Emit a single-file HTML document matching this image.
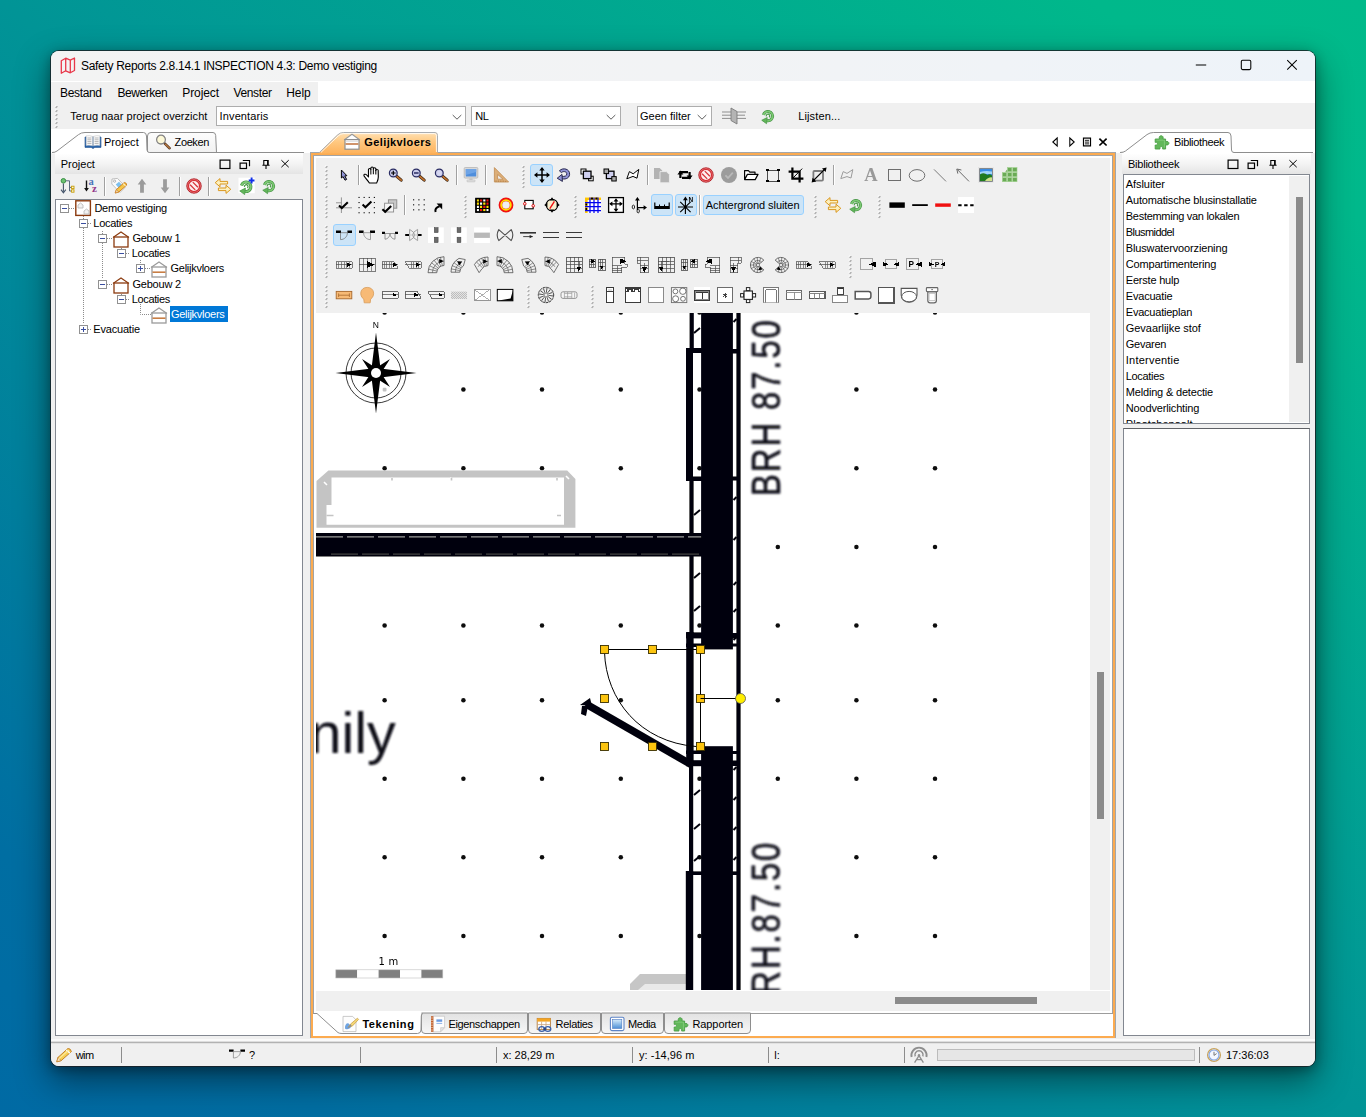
<!DOCTYPE html><html lang="nl"><head><meta charset="utf-8"><title>Safety Reports</title><style>
*{box-sizing:border-box;margin:0;padding:0}
html,body{width:1366px;height:1117px;overflow:hidden}
body{position:relative;font-family:"Liberation Sans",sans-serif;font-size:11px;color:#000;
 background:linear-gradient(to top right,#006aa4 0%,#006ea2 12%,#019496 50%,#00b88b 90%,#00ba8a 100%);}
#shadow{position:absolute;left:51px;top:51px;width:1264px;height:1015px;border-radius:8px;box-shadow:0 0 0 1px rgba(25,30,35,.78),0 14px 34px 2px rgba(0,0,0,.44),0 3px 12px 1px rgba(0,0,0,.30)}
#win{position:absolute;left:51px;top:51px;width:1264px;height:1015px;border-radius:8px;overflow:hidden;background:#f0f0f0}
#c{position:absolute;left:-51px;top:-51px;width:1366px;height:1117px}
#c div,#c span,#c svg{position:absolute}
.t{white-space:nowrap;line-height:14px;height:14px}
.b{font-weight:bold}
.sep{width:1px;background:#a0a0a0}
.sepw{width:1px;background:#fff}
.grip{width:3px;background:repeating-linear-gradient(to bottom,#f0f0f0 0 1px,#fff 1px 2px,#bdbdbd 2px 3.4px,#f0f0f0 3.4px 4px);transform:skewY(-35deg)}
.selbtn{background:#cce4f7;border:1px solid #99d1ff;border-radius:3px}
.hdr{background:linear-gradient(to bottom,#ffffff 0%,#f4f4f4 50%,#e4e4e4 100%)}
.box{background:#fff;border:1px solid #828790}
.combo{background:#fff;border:1px solid #adadad;height:20px}
</style></head><body>
<div id="shadow"></div><div id="win"><div id="c">
<div class="" style="left:51px;top:51px;width:1264px;height:30px;background:linear-gradient(to right,#f3f3f3 0%,#f2f3f5 50%,#eef3f9 100%)"></div>
<svg style="left:55.5px;top:53.5px" width="24" height="24" viewBox="-12 -12 24 24"><path d="M-6.7 -5.3 L-2.3 -7.8 L2.3 -5.8 L6.5 -8 L6.5 4.5 L2.3 6.8 L-2.3 4.8 L-6.7 7.2 Z M-2.3 -7.8 V4.8 M2.3 -5.8 V6.8" fill="none" stroke="#e8384a" stroke-width="1.3" stroke-linejoin="round"/></svg>
<span class="t " style="left:81px;top:59px;font-size:12px;line-height:16px;height:16px;top:57.8px;letter-spacing:-0.30px">Safety Reports 2.8.14.1 INSPECTION 4.3: Demo vestiging</span>
<svg style="left:1189px;top:53.3px" width="24" height="24" viewBox="-12 -12 24 24"><path d="M-5.2 0 H5.2" stroke="#000" stroke-width="1.05"/></svg>
<svg style="left:1234px;top:52.9px" width="24" height="24" viewBox="-12 -12 24 24"><rect x="-4.7" y="-4.8" width="9.5" height="9.4" rx="1.3" fill="none" stroke="#000" stroke-width="1.05"/></svg>
<svg style="left:1280px;top:52.9px" width="24" height="24" viewBox="-12 -12 24 24"><path d="M-4.8 -4.9 L4.8 4.7 M4.8 -4.9 L-4.8 4.7" stroke="#000" stroke-width="1.05"/></svg>
<div class="" style="left:51px;top:81px;width:1264px;height:22px;background:#fff"></div>
<div class="" style="left:51px;top:82px;width:267px;height:21px;background:#f0f0f0"></div>
<span class="t " style="left:60px;top:86px;font-size:12px;line-height:16px;height:16px;top:84.8px;letter-spacing:-0.34px">Bestand</span>
<span class="t " style="left:117.5px;top:86px;font-size:12px;line-height:16px;height:16px;top:84.8px;letter-spacing:-0.47px">Bewerken</span>
<span class="t " style="left:182.3px;top:86px;font-size:12px;line-height:16px;height:16px;top:84.8px;letter-spacing:-0.11px">Project</span>
<span class="t " style="left:233.4px;top:86px;font-size:12px;line-height:16px;height:16px;top:84.8px;letter-spacing:-0.35px">Venster</span>
<span class="t " style="left:286.2px;top:86px;font-size:12px;line-height:16px;height:16px;top:84.8px;letter-spacing:-0.03px">Help</span>
<div class="" style="left:51px;top:103px;width:1264px;height:26px;background:#f0f0f0"></div>
<svg style="left:54.3px;top:105px" width="5" height="25" viewBox="0 0 5 25"><path d="M0.9 2 L2.5 0.4" stroke="#fff" stroke-width="1.2"/><path d="M1.6 2.8 L3.4 1.2" stroke="#a9a9a9" stroke-width="1.5"/><path d="M0.9 6 L2.5 4.4" stroke="#fff" stroke-width="1.2"/><path d="M1.6 6.8 L3.4 5.2" stroke="#a9a9a9" stroke-width="1.5"/><path d="M0.9 10 L2.5 8.4" stroke="#fff" stroke-width="1.2"/><path d="M1.6 10.8 L3.4 9.2" stroke="#a9a9a9" stroke-width="1.5"/><path d="M0.9 14 L2.5 12.4" stroke="#fff" stroke-width="1.2"/><path d="M1.6 14.8 L3.4 13.2" stroke="#a9a9a9" stroke-width="1.5"/><path d="M0.9 18 L2.5 16.4" stroke="#fff" stroke-width="1.2"/><path d="M1.6 18.8 L3.4 17.2" stroke="#a9a9a9" stroke-width="1.5"/><path d="M0.9 22 L2.5 20.4" stroke="#fff" stroke-width="1.2"/><path d="M1.6 22.8 L3.4 21.2" stroke="#a9a9a9" stroke-width="1.5"/></svg>
<span class="t " style="left:70.3px;top:109px;letter-spacing:0.05px">Terug naar project overzicht</span>
<div class="combo" style="left:216px;top:106px;width:250px;height:20px;"></div>
<span class="t " style="left:219.6px;top:109px;letter-spacing:0.12px">Inventaris</span>
<svg style="left:445px;top:104.5px" width="24" height="24" viewBox="-12 -12 24 24"><path d="M-4.3 -2 L0 2.2 L4.3 -2" fill="none" stroke="#555" stroke-width="0.95"/></svg>
<div class="combo" style="left:471px;top:106px;width:150px;height:20px;"></div>
<span class="t " style="left:475.3px;top:109px;letter-spacing:-0.60px">NL</span>
<svg style="left:599px;top:104.5px" width="24" height="24" viewBox="-12 -12 24 24"><path d="M-4.3 -2 L0 2.2 L4.3 -2" fill="none" stroke="#555" stroke-width="0.95"/></svg>
<div class="combo" style="left:637px;top:106px;width:75px;height:20px;"></div>
<span class="t " style="left:640px;top:109px;">Geen filter</span>
<svg style="left:690px;top:104.5px" width="24" height="24" viewBox="-12 -12 24 24"><path d="M-4.3 -2 L0 2.2 L4.3 -2" fill="none" stroke="#555" stroke-width="0.95"/></svg>
<svg style="left:722px;top:104px" width="24" height="24" viewBox="-12 -12 24 24"><path d="M-14 -4 H-3 M-13 -0.8 H-3 M-13.5 2.4 H-3 M3 -4 H14 M3 -0.8 H11 M3 2.4 H12" stroke="#8f8f8f" stroke-width="1"/><path d="M-3 -8 L3 -4.5 V8 L-3 4.5 Z" fill="#b4b4b4" stroke="#7c7c7c" stroke-width="0.9"/></svg>
<svg style="left:756px;top:104px" width="24" height="24" viewBox="-12 -12 24 24"><g transform="scale(0.92)"><path d="M-4.9 -1.2 A5 5 0 1 1 -1.4 5" fill="none" stroke="#3f8f3f" stroke-width="3.3"/><path d="M-4.9 -1.2 A5 5 0 1 1 -1.4 5" fill="none" stroke="#7cc873" stroke-width="2"/><path d="M-0.8 1.6 L-6.8 4.6 L-1.6 8.4 Z" fill="#62b65a" stroke="#3f8f3f" stroke-width="0.7" stroke-linejoin="round"/><path d="M-1.8 0.4 A1.9 1.9 0 1 1 1.2 1.4" fill="none" stroke="#4a9c47" stroke-width="1.3"/></g></svg>
<span class="t " style="left:798.2px;top:109px;letter-spacing:0.13px">Lijsten...</span>
<div class="" style="left:51px;top:129px;width:1264px;height:24px;background:#fff"></div>
<div class="" style="left:52px;top:153px;width:252px;height:884px;background:#f0f0f0"></div>
<div class="hdr" style="left:55px;top:153px;width:248px;height:21px;"></div>
<span class="t " style="left:60.8px;top:157px;letter-spacing:-0.02px">Project</span>
<svg style="left:212.5px;top:152px" width="24" height="24" viewBox="-12 -12 24 24"><rect x="-4.9" y="-3.9" width="9.8" height="8.4" fill="none" stroke="#000" stroke-width="1.2"/></svg>
<svg style="left:233px;top:152px" width="24" height="24" viewBox="-12 -12 24 24"><rect x="-4.9" y="-0.9" width="6.4" height="5.4" fill="none" stroke="#000" stroke-width="1.2"/><path d="M-2.2 -3.5 H4.5 V2.2" fill="none" stroke="#000" stroke-width="1.2"/></svg>
<svg style="left:253.5px;top:152px" width="24" height="24" viewBox="-12 -12 24 24"><path d="M-2.2 1.2 V-3.5 H2.2 V1.2 M-3.6 1.3 H3.6 M0 1.3 V5 M1.6 -3.5 V1.2" fill="none" stroke="#000" stroke-width="1.1"/></svg>
<svg style="left:272.5px;top:152px" width="24" height="24" viewBox="-12 -12 24 24"><path d="M-3.6 -3.8 L3.7 3.2 M3.7 -3.8 L-3.6 3.2" stroke="#000" stroke-width="1"/></svg>
<svg style="left:55px;top:173.8px" width="24" height="24" viewBox="-12 -12 24 24"><circle cx="-3.6" cy="-5.2" r="2.3" fill="#6cc070" stroke="#2f8a3a" stroke-width="0.9"/><path d="M-3.6 -2.4 V5.6 M-6 3.6 L-3.6 6.8 L-1.2 3.6" fill="none" stroke="#44546a" stroke-width="1.1"/><path d="M-1.2 -5.2 H2.5 V5 H4.4 M2.5 1.4 H4.4" fill="none" stroke="#5a6a7e" stroke-width="1"/><rect x="4.6" y="0.2" width="2.4" height="2.4" fill="#fffbe0" stroke="#c59a00" stroke-width="0.9"/><rect x="4.6" y="3.8" width="2.4" height="2.4" fill="#fffbe0" stroke="#c59a00" stroke-width="0.9"/></svg>
<svg style="left:78.5px;top:173.8px" width="24" height="24" viewBox="-12 -12 24 24"><path d="M-4.5 -5.5 V3.4" stroke="#111" stroke-width="1.4"/><path d="M-6.9 2 L-4.5 5.4 L-2.1 2 Z" fill="#111"/><text x="-2.4" y="-0.6" font-family="Liberation Serif, serif" font-weight="bold" font-size="10.5" fill="#4a72b8">a</text><text x="1" y="6" font-family="Liberation Serif, serif" font-weight="bold" font-size="11" fill="#93388a">z</text></svg>
<svg style="left:107px;top:173.8px" width="24" height="24" viewBox="-12 -12 24 24"><path d="M-7 -7 L-1.5 -7.6 L6.5 1 L1 6.5 L-7.2 -2 Z" fill="#fbfbfb" stroke="#b9b9b9" stroke-width="0.9"/><circle cx="-4.4" cy="-4.8" r="1.1" fill="#fff" stroke="#999" stroke-width="0.7"/><path d="M-3.3 -1.5 L0 -4.2 L3.2 -0.8 L-0.2 2 Z" fill="#7ec0ee"/><path d="M-3.8 7 L-2.6 3.6 L5.2 -3.4 Q7.6 -3.6 7.7 -0.9 L-0.2 6 Z" fill="#f6c649" stroke="#c77a1e" stroke-width="0.9"/><path d="M-3.8 7 L-2.6 3.6 L-0.2 6 Z" fill="#f3dcb4" stroke="#c77a1e" stroke-width="0.6"/><path d="M4.1 -2.4 L6.7 0" stroke="#fff" stroke-width="1"/></svg>
<svg style="left:130px;top:173.8px" width="24" height="24" viewBox="-12 -12 24 24"><path d="M0 -7.2 L4.3 -1.6 H1.9 V6.8 H-1.9 V-1.6 H-4.3 Z" fill="#9b9b9b"/></svg>
<svg style="left:153px;top:173.8px" width="24" height="24" viewBox="-12 -12 24 24"><path d="M0 7.2 L4.3 1.6 H1.9 V-6.8 H-1.9 V1.6 H-4.3 Z" fill="#9b9b9b"/></svg>
<svg style="left:181.5px;top:173.8px" width="24" height="24" viewBox="-12 -12 24 24"><circle r="7.3" fill="#d42a30"/><circle r="6.5" fill="none" stroke="#f29a9a" stroke-width="0.8" opacity="0.85"/><circle r="4.9" fill="#fdeeee"/><path d="M-3.9 -1.2 L1.2 3.9 M-1.2 -3.9 L3.9 1.2" stroke="#d8343a" stroke-width="1.3"/><circle r="7.3" fill="none" stroke="#a8141c" stroke-width="0.7"/></svg>
<svg style="left:211px;top:173.8px" width="24" height="24" viewBox="-12 -12 24 24"><path d="M-7.8 -3.3 L-3 -7.4 V-4.6 H4.6 V-2 H-3 V0.8 Z" fill="#fdf0bd" stroke="#d9971f" stroke-width="1" stroke-linejoin="round"/><path d="M7.8 3.3 L3 -0.8 V2 H-4.6 V4.6 H3 V7.4 Z" fill="#fdf0bd" stroke="#d9971f" stroke-width="1" stroke-linejoin="round"/></svg>
<svg style="left:234.5px;top:173.8px" width="24" height="24" viewBox="-12 -12 24 24"><rect x="-8.5" y="-8.3" width="16.2" height="15.5" fill="#fff"/><g transform="translate(-0.8 0.6)"><g transform="scale(0.95)"><path d="M-4.9 -1.2 A5 5 0 1 1 -1.4 5" fill="none" stroke="#3f8f3f" stroke-width="3.3"/><path d="M-4.9 -1.2 A5 5 0 1 1 -1.4 5" fill="none" stroke="#7cc873" stroke-width="2"/><path d="M-0.8 1.6 L-6.8 4.6 L-1.6 8.4 Z" fill="#62b65a" stroke="#3f8f3f" stroke-width="0.7" stroke-linejoin="round"/><path d="M-1.8 0.4 A1.9 1.9 0 1 1 1.2 1.4" fill="none" stroke="#4a9c47" stroke-width="1.3"/></g></g><path d="M4.6 -8.4 V-2.6 M1.7 -5.5 H7.5" stroke="#1030e8" stroke-width="1.9"/></svg>
<svg style="left:257px;top:173.8px" width="24" height="24" viewBox="-12 -12 24 24"><g transform="scale(0.92)"><path d="M-4.9 -1.2 A5 5 0 1 1 -1.4 5" fill="none" stroke="#3f8f3f" stroke-width="3.3"/><path d="M-4.9 -1.2 A5 5 0 1 1 -1.4 5" fill="none" stroke="#7cc873" stroke-width="2"/><path d="M-0.8 1.6 L-6.8 4.6 L-1.6 8.4 Z" fill="#62b65a" stroke="#3f8f3f" stroke-width="0.7" stroke-linejoin="round"/><path d="M-1.8 0.4 A1.9 1.9 0 1 1 1.2 1.4" fill="none" stroke="#4a9c47" stroke-width="1.3"/></g></svg>
<div class="sep" style="left:104px;top:177px;width:1px;height:19px;"></div>
<div class="sepw" style="left:105px;top:177px;width:1px;height:19px;"></div>
<div class="sep" style="left:179px;top:177px;width:1px;height:19px;"></div>
<div class="sepw" style="left:180px;top:177px;width:1px;height:19px;"></div>
<div class="sep" style="left:208px;top:177px;width:1px;height:19px;"></div>
<div class="sepw" style="left:209px;top:177px;width:1px;height:19px;"></div>
<div class="box" style="left:55px;top:199px;width:248px;height:837px;"></div>
<svg style="left:0;top:195px" width="310" height="150" viewBox="0 195 310 150"><path d="M69 208.5 H75" stroke="#8c8c8c" stroke-width="1" stroke-dasharray="1 1" fill="none"/><path d="M83.5 216 V219 M83.5 228 V324" stroke="#8c8c8c" stroke-width="1" stroke-dasharray="1 1" fill="none"/><path d="M88 223.5 H92" stroke="#8c8c8c" stroke-width="1" stroke-dasharray="1 1" fill="none"/><path d="M102.5 231 V234 M102.5 243 V279" stroke="#8c8c8c" stroke-width="1" stroke-dasharray="1 1" fill="none"/><path d="M107 238.5 H112 M107 284.5 H112" stroke="#8c8c8c" stroke-width="1" stroke-dasharray="1 1" fill="none"/><path d="M121.5 246 V249 M121.5 292 V295" stroke="#8c8c8c" stroke-width="1" stroke-dasharray="1 1" fill="none"/><path d="M126 253.5 H130 M126 299.5 H130" stroke="#8c8c8c" stroke-width="1" stroke-dasharray="1 1" fill="none"/><path d="M140.5 260 V264 M140.5 304 V314.5 H151" stroke="#8c8c8c" stroke-width="1" stroke-dasharray="1 1" fill="none"/><path d="M145 268.5 H151" stroke="#8c8c8c" stroke-width="1" stroke-dasharray="1 1" fill="none"/><path d="M88 329.5 H92" stroke="#8c8c8c" stroke-width="1" stroke-dasharray="1 1" fill="none"/><rect x="60.5" y="204.5" width="8" height="8" fill="#fff" stroke="#919191"/><path d="M62 208.5 h5" stroke="#3a4ea0" stroke-width="1"/><rect x="79.5" y="219.5" width="8" height="8" fill="#fff" stroke="#919191"/><path d="M81 223.5 h5" stroke="#3a4ea0" stroke-width="1"/><rect x="98.5" y="234.5" width="8" height="8" fill="#fff" stroke="#919191"/><path d="M100 238.5 h5" stroke="#3a4ea0" stroke-width="1"/><rect x="117.5" y="249.5" width="8" height="8" fill="#fff" stroke="#919191"/><path d="M119 253.5 h5" stroke="#3a4ea0" stroke-width="1"/><rect x="136.5" y="264.5" width="8" height="8" fill="#fff" stroke="#919191"/><path d="M138 268.5 h5" stroke="#3a4ea0" stroke-width="1"/><path d="M140.5 266 v5" stroke="#3a4ea0" stroke-width="1"/><rect x="98.5" y="280.5" width="8" height="8" fill="#fff" stroke="#919191"/><path d="M100 284.5 h5" stroke="#3a4ea0" stroke-width="1"/><rect x="117.5" y="295.5" width="8" height="8" fill="#fff" stroke="#919191"/><path d="M119 299.5 h5" stroke="#3a4ea0" stroke-width="1"/><rect x="79.5" y="325.5" width="8" height="8" fill="#fff" stroke="#919191"/><path d="M81 329.5 h5" stroke="#3a4ea0" stroke-width="1"/><path d="M83.5 327 v5" stroke="#3a4ea0" stroke-width="1"/><rect x="75.8" y="200.8" width="14.6" height="14.6" fill="#fff" stroke="#8b3a0e" stroke-width="1.4"/><path d="M78 205 l2.5 -2 l2.5 2 v3 h-5z M84 211 l2.5 -2 l2.5 2 v3 h-5z" fill="#f2f2f2" stroke="#b5b5b5" stroke-width="0.8"/><path d="M113 237.5 l8 -5.5 l8 5.5" fill="none" stroke="#8b3a0e" stroke-width="1.1"/><rect x="114" y="237" width="14" height="10" fill="#fff" stroke="#8b3a0e" stroke-width="1.3"/><path d="M113 283.5 l8 -5.5 l8 5.5" fill="none" stroke="#8b3a0e" stroke-width="1.1"/><rect x="114" y="283" width="14" height="10" fill="#fff" stroke="#8b3a0e" stroke-width="1.3"/><path d="M151 267.5 l8 -5.5 l8 5.5" fill="none" stroke="#9a9a9a" stroke-width="1.2"/><rect x="152" y="267" width="14" height="10" fill="#fff" stroke="#9a9a9a" stroke-width="1.3"/><path d="M152.5 272.2 h13" stroke="#c87e45" stroke-width="1.6"/><path d="M151 313.5 l8 -5.5 l8 5.5" fill="none" stroke="#9a9a9a" stroke-width="1.2"/><rect x="152" y="313" width="14" height="10" fill="#fff" stroke="#9a9a9a" stroke-width="1.3"/><path d="M152.5 318.2 h13" stroke="#c87e45" stroke-width="1.6"/></svg>
<span class="t " style="left:94.4px;top:200.6px;letter-spacing:-0.23px">Demo vestiging</span>
<span class="t " style="left:93.3px;top:215.6px;letter-spacing:-0.27px">Locaties</span>
<span class="t " style="left:132.4px;top:230.6px;letter-spacing:-0.27px">Gebouw 1</span>
<span class="t " style="left:131.8px;top:245.6px;letter-spacing:-0.37px">Locaties</span>
<span class="t " style="left:170.6px;top:260.6px;letter-spacing:-0.28px">Gelijkvloers</span>
<span class="t " style="left:132.4px;top:276.6px;letter-spacing:-0.19px">Gebouw 2</span>
<span class="t " style="left:131.8px;top:291.6px;letter-spacing:-0.37px">Locaties</span>
<div style="left:170px;top:306px;width:58px;height:16px;background:#0078d7"></div>
<span class="t " style="left:171px;top:306.6px;color:#fff;letter-spacing:-0.28px">Gelijkvloers</span>
<span class="t " style="left:93.3px;top:321.6px;letter-spacing:-0.19px">Evacuatie</span>
<div class="" style="left:1119px;top:153px;width:195px;height:884px;background:#f0f0f0"></div>
<div class="hdr" style="left:1122px;top:153px;width:189px;height:21px;"></div>
<span class="t " style="left:1128px;top:157px;letter-spacing:-0.24px">Bibliotheek</span>
<svg style="left:1220.5px;top:152px" width="24" height="24" viewBox="-12 -12 24 24"><rect x="-4.9" y="-3.9" width="9.8" height="8.4" fill="none" stroke="#000" stroke-width="1.2"/></svg>
<svg style="left:1240.5px;top:152px" width="24" height="24" viewBox="-12 -12 24 24"><rect x="-4.9" y="-0.9" width="6.4" height="5.4" fill="none" stroke="#000" stroke-width="1.2"/><path d="M-2.2 -3.5 H4.5 V2.2" fill="none" stroke="#000" stroke-width="1.2"/></svg>
<svg style="left:1261px;top:152px" width="24" height="24" viewBox="-12 -12 24 24"><path d="M-2.2 1.2 V-3.5 H2.2 V1.2 M-3.6 1.3 H3.6 M0 1.3 V5 M1.6 -3.5 V1.2" fill="none" stroke="#000" stroke-width="1.1"/></svg>
<svg style="left:1281px;top:152px" width="24" height="24" viewBox="-12 -12 24 24"><path d="M-3.6 -3.8 L3.7 3.2 M3.7 -3.8 L-3.6 3.2" stroke="#000" stroke-width="1"/></svg>
<div class="box" style="left:1123px;top:174px;width:187px;height:250px;"></div>
<span class="t " style="left:1125.8px;top:177px;letter-spacing:-0.07px">Afsluiter</span>
<span class="t " style="left:1125.8px;top:193px;letter-spacing:-0.17px">Automatische blusinstallatie</span>
<span class="t " style="left:1125.8px;top:209px;letter-spacing:-0.29px">Bestemming van lokalen</span>
<span class="t " style="left:1125.8px;top:225px;letter-spacing:-0.57px">Blusmiddel</span>
<span class="t " style="left:1125.8px;top:241px;letter-spacing:-0.15px">Bluswatervoorziening</span>
<span class="t " style="left:1125.8px;top:257px;letter-spacing:-0.19px">Compartimentering</span>
<span class="t " style="left:1125.8px;top:273px;letter-spacing:-0.21px">Eerste hulp</span>
<span class="t " style="left:1125.8px;top:289px;letter-spacing:-0.20px">Evacuatie</span>
<span class="t " style="left:1125.8px;top:305px;letter-spacing:-0.22px">Evacuatieplan</span>
<span class="t " style="left:1125.8px;top:321px;letter-spacing:-0.05px">Gevaarlijke stof</span>
<span class="t " style="left:1125.8px;top:337px;letter-spacing:-0.25px">Gevaren</span>
<span class="t " style="left:1125.8px;top:353px;letter-spacing:0.22px">Interventie</span>
<span class="t " style="left:1125.8px;top:369px;letter-spacing:-0.33px">Locaties</span>
<span class="t " style="left:1125.8px;top:385px;letter-spacing:-0.18px">Melding &amp; detectie</span>
<span class="t " style="left:1125.8px;top:401px;letter-spacing:-0.16px">Noodverlichting</span>
<div class="" style="left:1124px;top:415px;width:165px;height:8px;overflow:hidden"><span class="t" style="left:1.8px;top:2px">Plaatsbepaalt</span></div>
<div class="" style="left:1289px;top:176px;width:20px;height:246px;background:#f0f0f0"></div>
<div class="" style="left:1296px;top:197px;width:7px;height:166px;background:#8b8b8b"></div>
<div class="box" style="left:1123px;top:428px;width:187px;height:608px;border-top-color:#5f6166"></div>
<div class="" style="left:310px;top:152px;width:806px;height:887px;background:#fcab50;border:1px solid #a3a7ab"></div>
<div class="" style="left:313px;top:155px;width:800px;height:881px;background:#fff"></div>
<div class="" style="left:313px;top:155px;width:800px;height:1px;background:#a3a3a3"></div>
<div class="" style="left:313px;top:155px;width:1px;height:859px;background:#a3a3a3"></div>
<div class="" style="left:1112px;top:155px;width:1px;height:859px;background:#a3a3a3"></div>
<div class="" style="left:316px;top:158px;width:794px;height:155px;background:#f0f0f0"></div>
<div style="left:316px;top:313px;width:774px;height:677px;background:#fff;overflow:hidden"><svg style="left:0;top:0" width="774" height="677" viewBox="316 313 774 677"><defs><filter id="bl" x="-5%" y="-5%" width="110%" height="110%"><feGaussianBlur stdDeviation="0.55"/></filter><filter id="bl2" x="-5%" y="-5%" width="110%" height="110%"><feGaussianBlur stdDeviation="0.9"/></filter></defs><g filter="url(#bl)"><circle cx="384.6" cy="312.4" r="2.25" fill="#0c0c0c"/><circle cx="463.4" cy="312.4" r="2.25" fill="#0c0c0c"/><circle cx="542" cy="312.4" r="2.25" fill="#0c0c0c"/><circle cx="620.8" cy="312.4" r="2.25" fill="#0c0c0c"/><circle cx="699.5" cy="312.4" r="2.25" fill="#0c0c0c"/><circle cx="856.4" cy="312.4" r="2.25" fill="#0c0c0c"/><circle cx="935" cy="312.4" r="2.25" fill="#0c0c0c"/><rect x="382.7" y="387.7" width="3.8" height="3.8" rx="1" fill="#c2c2c2"/><circle cx="463.4" cy="389.6" r="2.25" fill="#0c0c0c"/><circle cx="542" cy="389.6" r="2.25" fill="#0c0c0c"/><circle cx="620.8" cy="389.6" r="2.25" fill="#0c0c0c"/><circle cx="699.5" cy="389.6" r="2.25" fill="#0c0c0c"/><circle cx="856.4" cy="389.6" r="2.25" fill="#0c0c0c"/><circle cx="935" cy="389.6" r="2.25" fill="#0c0c0c"/><circle cx="384.6" cy="468.2" r="2.25" fill="#0c0c0c"/><circle cx="463.4" cy="468.2" r="2.25" fill="#0c0c0c"/><circle cx="542" cy="468.2" r="2.25" fill="#0c0c0c"/><circle cx="620.8" cy="468.2" r="2.25" fill="#0c0c0c"/><circle cx="699.5" cy="468.2" r="2.25" fill="#0c0c0c"/><circle cx="856.4" cy="468.2" r="2.25" fill="#0c0c0c"/><circle cx="935" cy="468.2" r="2.25" fill="#0c0c0c"/><circle cx="384.6" cy="546.9" r="2.25" fill="#0c0c0c"/><circle cx="463.4" cy="546.9" r="2.25" fill="#0c0c0c"/><circle cx="542" cy="546.9" r="2.25" fill="#0c0c0c"/><circle cx="620.8" cy="546.9" r="2.25" fill="#0c0c0c"/><circle cx="699.5" cy="546.9" r="2.25" fill="#0c0c0c"/><circle cx="777.8" cy="546.9" r="2.25" fill="#0c0c0c"/><circle cx="856.4" cy="546.9" r="2.25" fill="#0c0c0c"/><circle cx="935" cy="546.9" r="2.25" fill="#0c0c0c"/><circle cx="384.6" cy="625.5" r="2.25" fill="#0c0c0c"/><circle cx="463.4" cy="625.5" r="2.25" fill="#0c0c0c"/><circle cx="542" cy="625.5" r="2.25" fill="#0c0c0c"/><circle cx="620.8" cy="625.5" r="2.25" fill="#0c0c0c"/><circle cx="699.5" cy="625.5" r="2.25" fill="#0c0c0c"/><circle cx="777.8" cy="625.5" r="2.25" fill="#0c0c0c"/><circle cx="856.4" cy="625.5" r="2.25" fill="#0c0c0c"/><circle cx="935" cy="625.5" r="2.25" fill="#0c0c0c"/><circle cx="384.6" cy="700.2" r="2.25" fill="#0c0c0c"/><circle cx="463.4" cy="700.2" r="2.25" fill="#0c0c0c"/><circle cx="542" cy="700.2" r="2.25" fill="#0c0c0c"/><circle cx="620.8" cy="700.2" r="2.25" fill="#0c0c0c"/><circle cx="699.5" cy="700.2" r="2.25" fill="#0c0c0c"/><circle cx="777.8" cy="700.2" r="2.25" fill="#0c0c0c"/><circle cx="856.4" cy="700.2" r="2.25" fill="#0c0c0c"/><circle cx="935" cy="700.2" r="2.25" fill="#0c0c0c"/><circle cx="384.6" cy="778.7" r="2.25" fill="#0c0c0c"/><circle cx="463.4" cy="778.7" r="2.25" fill="#0c0c0c"/><circle cx="542" cy="778.7" r="2.25" fill="#0c0c0c"/><circle cx="620.8" cy="778.7" r="2.25" fill="#0c0c0c"/><circle cx="699.5" cy="778.7" r="2.25" fill="#0c0c0c"/><circle cx="777.8" cy="778.7" r="2.25" fill="#0c0c0c"/><circle cx="856.4" cy="778.7" r="2.25" fill="#0c0c0c"/><circle cx="935" cy="778.7" r="2.25" fill="#0c0c0c"/><circle cx="384.6" cy="857.3" r="2.25" fill="#0c0c0c"/><circle cx="463.4" cy="857.3" r="2.25" fill="#0c0c0c"/><circle cx="542" cy="857.3" r="2.25" fill="#0c0c0c"/><circle cx="620.8" cy="857.3" r="2.25" fill="#0c0c0c"/><circle cx="699.5" cy="857.3" r="2.25" fill="#0c0c0c"/><circle cx="856.4" cy="857.3" r="2.25" fill="#0c0c0c"/><circle cx="935" cy="857.3" r="2.25" fill="#0c0c0c"/><circle cx="384.6" cy="935.9" r="2.25" fill="#0c0c0c"/><circle cx="463.4" cy="935.9" r="2.25" fill="#0c0c0c"/><circle cx="542" cy="935.9" r="2.25" fill="#0c0c0c"/><circle cx="620.8" cy="935.9" r="2.25" fill="#0c0c0c"/><circle cx="699.5" cy="935.9" r="2.25" fill="#0c0c0c"/><circle cx="856.4" cy="935.9" r="2.25" fill="#0c0c0c"/><circle cx="935" cy="935.9" r="2.25" fill="#0c0c0c"/><path d="M328.4 470.4 L567.2 470.4 L575.4 479 L575.4 527.8 L316.5 527.8 L316.5 481 Z" fill="#c4c4c4"/><path d="M331.5 477.5 L564 477.5 L564 524.7 L326.5 524.7 L326.5 505 L331.5 505 Z" fill="#fff"/><path d="M324 482 l3 3 M566 476 l3 3 M392 477 v3 M451 477 v3 M557 477 v3 M327 515 h8 M556 515 h8" stroke="#fff" stroke-width="1.6"/><path d="M392 477.5 l0 3 M451.5 477.5 l0 3 M557 477.5 l0 3 M326.5 515.5 h7 M561 515.5 h-4" stroke="#c4c4c4" stroke-width="1.6"/><path d="M640 974 L690 974 L690 990 L630 990 L630 984 Z" fill="#c6c6c6"/><path d="M645 984 L690 984 L690 990 L638 990 Z" fill="#e9e9e9"/></g><g filter="url(#bl)" fill="#05060a" stroke="none"><rect x="316" y="533" width="390" height="23.5"/><rect x="316" y="536.4" width="27" height="1" fill="#fff" opacity="0.75"/><rect x="331" y="553.6" width="27" height="1" fill="#fff" opacity="0.3"/><rect x="347" y="536.4" width="27" height="1" fill="#fff" opacity="0.75"/><rect x="362" y="553.6" width="27" height="1" fill="#fff" opacity="0.3"/><rect x="378" y="536.4" width="27" height="1" fill="#fff" opacity="0.75"/><rect x="393" y="553.6" width="27" height="1" fill="#fff" opacity="0.3"/><rect x="409" y="536.4" width="27" height="1" fill="#fff" opacity="0.75"/><rect x="424" y="553.6" width="27" height="1" fill="#fff" opacity="0.3"/><rect x="440" y="536.4" width="27" height="1" fill="#fff" opacity="0.75"/><rect x="455" y="553.6" width="27" height="1" fill="#fff" opacity="0.3"/><rect x="471" y="536.4" width="27" height="1" fill="#fff" opacity="0.75"/><rect x="486" y="553.6" width="27" height="1" fill="#fff" opacity="0.3"/><rect x="502" y="536.4" width="27" height="1" fill="#fff" opacity="0.75"/><rect x="517" y="553.6" width="27" height="1" fill="#fff" opacity="0.3"/><rect x="533" y="536.4" width="27" height="1" fill="#fff" opacity="0.75"/><rect x="548" y="553.6" width="27" height="1" fill="#fff" opacity="0.3"/><rect x="564" y="536.4" width="27" height="1" fill="#fff" opacity="0.75"/><rect x="579" y="553.6" width="27" height="1" fill="#fff" opacity="0.3"/><rect x="595" y="536.4" width="27" height="1" fill="#fff" opacity="0.75"/><rect x="610" y="553.6" width="27" height="1" fill="#fff" opacity="0.3"/><rect x="626" y="536.4" width="27" height="1" fill="#fff" opacity="0.75"/><rect x="641" y="553.6" width="27" height="1" fill="#fff" opacity="0.3"/><rect x="657" y="536.4" width="27" height="1" fill="#fff" opacity="0.75"/><rect x="672" y="553.6" width="27" height="1" fill="#fff" opacity="0.3"/><rect x="688" y="536.4" width="27" height="1" fill="#fff" opacity="0.75"/><rect x="703" y="553.6" width="27" height="1" fill="#fff" opacity="0.3"/><rect x="701.1" y="313" width="31.8" height="336.4"/><rect x="701.1" y="746.2" width="31.8" height="244"/><rect x="689.6" y="313" width="4.2" height="40"/><rect x="686" y="348" width="7" height="132"/><rect x="689.4" y="478" width="4.2" height="57"/><rect x="689.4" y="555" width="4.2" height="80"/><rect x="686.2" y="632" width="7.4" height="134"/><rect x="689" y="760" width="4.2" height="115"/><rect x="689" y="746" width="4.2" height="0"/><rect x="685.8" y="871" width="7.4" height="119"/><rect x="686" y="348" width="16" height="5"/><rect x="686" y="476.5" width="16" height="4.5"/><rect x="686" y="632.4" width="16" height="6"/><rect x="686" y="643.5" width="16" height="3.5"/><rect x="686" y="760.2" width="16" height="6"/><rect x="686" y="750.5" width="16" height="3.5"/><rect x="686" y="871.4" width="16" height="3.6"/><rect x="736.4" y="313" width="4.2" height="677"/><rect x="732" y="349" width="6" height="4.5"/><rect x="732" y="476.5" width="6" height="4"/><rect x="732" y="633" width="6" height="5.5"/><rect x="732" y="643.5" width="6" height="3"/><rect x="732" y="760.5" width="6" height="5.5"/><rect x="732" y="751" width="6" height="3"/><rect x="732" y="871.4" width="6" height="3.6"/></g><g filter="url(#bl)" stroke="#05060a" stroke-width="2" fill="none"><path d="M694 333 l6 -5"/><path d="M694 515 l6 -5"/><path d="M694 578 l6 -5"/><path d="M694 611 l6 -5"/><path d="M694 795 l6 -5"/><path d="M694 829 l6 -5"/><path d="M694 861 l6 -5"/><path d="M733.5 322 l3 -3"/><path d="M733.5 500 l3 -3"/><path d="M733.5 540 l3 -3"/><path d="M733.5 585 l3 -3"/><path d="M733.5 612 l3 -3"/><path d="M733.5 640 l3 -3"/><path d="M733.5 770 l3 -3"/><path d="M733.5 800 l3 -3"/><path d="M733.5 830 l3 -3"/><path d="M733.5 860 l3 -3"/></g><g filter="url(#bl)"><path d="M586 704 L692 765" stroke="#05060a" stroke-width="7.5" fill="none"/><path d="M580 705 L590 698 L592 706 Z M582 706 L588 706 L586 716 L581 714 Z" fill="#05060a"/></g><g filter="url(#bl2)" font-family="Liberation Sans, sans-serif" fill="#0a0a18" stroke="#0a0a18" stroke-width="0.55"><text transform="translate(779.6 496) rotate(-90) scale(0.79 1)" font-size="41.5" letter-spacing="2.45">BRH 87.50</text><text transform="translate(779.8 1018.5) rotate(-90) scale(0.79 1)" font-size="41.5" letter-spacing="2.45">BRH.87.50</text><text x="309.5" y="752.7" font-size="57.5" stroke="none">nily</text></g><g transform="translate(376 373)"><circle r="30" fill="none" stroke="#222" stroke-width="0.9"/><circle r="25" fill="none" stroke="#222" stroke-width="0.9"/><path d="M0 -40.5 L4.5 -4.5 L40.5 0 L4.5 4.5 L0 40.5 L-4.5 4.5 L-40.5 0 L-4.5 -4.5 Z" fill="#000"/><path d="M14 -14 L6 -1.5 L1.5 -6 Z M14 14 L1.5 6 L6 1.5 Z M-14 14 L-6 1.5 L-1.5 6 Z M-14 -14 L-1.5 -6 L-6 -1.5 Z" fill="#000"/><circle r="5" fill="#fff"/><text x="-0.3" y="-45.2" font-size="8.5" text-anchor="middle" font-family="Liberation Sans, sans-serif">N</text></g><text x="388.5" y="964.5" font-size="10" text-anchor="middle" font-family="DejaVu Sans, Liberation Sans, sans-serif" letter-spacing="0.3">1 m</text><rect x="335.8" y="969.8" width="21.4" height="8.2" fill="#808080"/><rect x="357.2" y="969.8" width="21.4" height="8.2" fill="#fff"/><rect x="378.6" y="969.8" width="21.4" height="8.2" fill="#808080"/><rect x="400" y="969.8" width="21.4" height="8.2" fill="#fff"/><rect x="421.4" y="969.8" width="21.4" height="8.2" fill="#808080"/><rect x="335.8" y="969.8" width="107" height="8.2" fill="none" stroke="#c0c0c0" stroke-width="0.6"/><g stroke="#000" stroke-width="1" fill="none"><path d="M604.5 649.5 H700.5 V746.5"/><path d="M604.5 652 C606 700 640 742 696 746.5"/><path d="M700.5 698.5 H740"/></g><rect x="600.5" y="645.5" width="8" height="8" fill="#fcc40f" stroke="#3a3000" stroke-width="0.9"/><rect x="648.5" y="645.5" width="8" height="8" fill="#fcc40f" stroke="#3a3000" stroke-width="0.9"/><rect x="696.5" y="645.5" width="8" height="8" fill="#fcc40f" stroke="#3a3000" stroke-width="0.9"/><rect x="600.5" y="694.5" width="8" height="8" fill="#fcc40f" stroke="#3a3000" stroke-width="0.9"/><rect x="696.5" y="694.5" width="8" height="8" fill="#fcc40f" stroke="#3a3000" stroke-width="0.9"/><rect x="600.5" y="742.5" width="8" height="8" fill="#fcc40f" stroke="#3a3000" stroke-width="0.9"/><rect x="648.5" y="742.5" width="8" height="8" fill="#fcc40f" stroke="#3a3000" stroke-width="0.9"/><rect x="696.5" y="742.5" width="8" height="8" fill="#fcc40f" stroke="#3a3000" stroke-width="0.9"/><path d="M700.5 698.5 H705" stroke="#000"/><circle cx="740.5" cy="698.5" r="5" fill="#ffee00" stroke="#555" stroke-width="0.8"/></svg></div>
<div class="" style="left:1090px;top:313px;width:20px;height:677px;background:#f0f0f0"></div>
<div class="" style="left:1097px;top:672px;width:7px;height:147px;background:#8b8b8b"></div>
<div class="" style="left:316px;top:991px;width:794px;height:20px;background:#f0f0f0"></div>
<div class="" style="left:895px;top:997px;width:142px;height:7px;background:#8b8b8b"></div>
<div class="" style="left:421px;top:1013px;width:692px;height:1px;background:#9c9c9c"></div>
<svg style="left:0;top:1005px" width="1366" height="40" viewBox="0 1005 1366 40">
<defs><linearGradient id="gtb" x1="0" y1="0" x2="0" y2="1"><stop offset="0" stop-color="#e2e2e2"/><stop offset="1" stop-color="#f7f7f7"/></linearGradient></defs>
<path d="M421.5 1013 L421.5 1030 Q421.5 1033.5 425 1033.5 L524 1033.5 Q527.5 1033.5 527.5 1030 L527.5 1013 Z" fill="url(#gtb)" stroke="#8e8e8e"/>
<path d="M528.5 1013 L528.5 1030 Q528.5 1033.5 532 1033.5 L597 1033.5 Q600.5 1033.5 600.5 1030 L600.5 1013 Z" fill="url(#gtb)" stroke="#8e8e8e"/>
<path d="M601.5 1013 L601.5 1030 Q601.5 1033.5 605 1033.5 L660 1033.5 Q663.5 1033.5 663.5 1030 L663.5 1013 Z" fill="url(#gtb)" stroke="#8e8e8e"/>
<path d="M664.5 1013 L664.5 1030 Q664.5 1033.5 668 1033.5 L747 1033.5 Q750.5 1033.5 750.5 1030 L750.5 1013 Z" fill="url(#gtb)" stroke="#8e8e8e"/>
<path d="M313.5 1013.5 H317 L338 1032.6 Q339.4 1033.5 342 1033.5 L417.5 1033.5 Q420.8 1033.5 421 1030 L421.3 1016 Q421.4 1013.5 423 1013.5 Z" fill="#fff" stroke="none"/>
<path d="M313.5 1013.5 H317 L338 1032.6 Q339.4 1033.5 342 1033.5 L417.5 1033.5 Q420.8 1033.5 421 1030 L421.3 1016 Q421.4 1013.5 423 1013.5" fill="none" stroke="#8e8e8e"/>
</svg>
<span class="t b" style="left:362.4px;top:1017px;letter-spacing:0.57px">Tekening</span>
<svg style="left:338.5px;top:1012px" width="24" height="24" viewBox="-12 -12 24 24"><path d="M-8 -7.6 H1.6 L5 -4.2 V7.6 H-8 Z" fill="#fdfdfd" stroke="#bdbdbd" stroke-width="0.8"/><path d="M-6 4.4 C-6.4 0 -3 -2.4 -1.6 0.6 C0.6 0.8 0.4 4 -1.6 4.6 C-3 5.6 -5 5.6 -6 4.4 Z" fill="#6fa4e2"/><path d="M-2.6 3 L-0.6 0.2 L6.4 -5.8 L7.6 -4.6 L1.2 2.2 Z" fill="#f5d878" stroke="#c69a3a" stroke-width="0.7"/><path d="M-4.4 4.6 L-2.6 3 L-0.6 0.2 L0.8 1.4 L-1.4 3.6 Z" fill="#8a8f99"/></svg>
<span class="t " style="left:448.4px;top:1017px;letter-spacing:-0.35px">Eigenschappen</span>
<svg style="left:425.5px;top:1012px" width="24" height="24" viewBox="-12 -12 24 24"><path d="M-5.2 -7.8 H6.6 V3.6 L2.6 7.8 H-5.2 Z" fill="#fdfdfd" stroke="#c6c6c6" stroke-width="0.8"/><path d="M6.6 3.6 H2.6 V7.8 Z" fill="#e2e2e2" stroke="#c6c6c6" stroke-width="0.6"/><rect x="-7" y="-7.8" width="2.4" height="15.6" fill="#c0602e"/><path d="M-7 -6 h2.4 M-7 -3.6 h2.4 M-7 -1.2 h2.4 M-7 1.2 h2.4 M-7 3.6 h2.4 M-7 6 h2.4" stroke="#f3d2b8" stroke-width="0.7"/><rect x="-1.6" y="-4.6" width="5.8" height="2.4" fill="#6b9be0"/><path d="M-1.6 -0.6 H4.2" stroke="#8db3ea" stroke-width="1"/></svg>
<span class="t " style="left:555.6px;top:1017px;letter-spacing:-0.32px">Relaties</span>
<svg style="left:532px;top:1012px" width="24" height="24" viewBox="-12 -12 24 24"><rect x="-6.8" y="-5.6" width="13.2" height="11" fill="#fff" stroke="#b07a3a" stroke-width="0.9"/><rect x="-6.8" y="-5.6" width="13.2" height="3.2" fill="#f4a522"/><path d="M-6.8 0.6 H6.4 M-2.4 -2.4 V5.4 M2 -2.4 V5.4" stroke="#caa27a" stroke-width="0.8"/><ellipse cx="-2.2" cy="5" rx="3" ry="2.3" fill="none" stroke="#3a5fa8" stroke-width="1.3"/><ellipse cx="3.8" cy="5" rx="3" ry="2.3" fill="none" stroke="#3a5fa8" stroke-width="1.3"/><path d="M-0.8 5 H2.4" stroke="#23407e" stroke-width="1.6"/></svg>
<span class="t " style="left:628.1px;top:1017px;letter-spacing:-0.47px">Media</span>
<svg style="left:604.5px;top:1012px" width="24" height="24" viewBox="-12 -12 24 24"><defs><linearGradient id="gmed" x1="0" y1="0" x2="0" y2="1"><stop offset="0" stop-color="#d6ecfb"/><stop offset="1" stop-color="#4c8fd6"/></linearGradient></defs><rect x="-6.6" y="-6.8" width="13.6" height="13.4" rx="1.6" fill="#fff" stroke="#5d84c6" stroke-width="1.1"/><rect x="-4.4" y="-4.6" width="9.2" height="9" fill="url(#gmed)" stroke="#4a78c0" stroke-width="0.6"/></svg>
<span class="t " style="left:692.4px;top:1017px;letter-spacing:-0.07px">Rapporten</span>
<svg style="left:668.5px;top:1012px" width="24" height="24" viewBox="-12 -12 24 24"><path d="M-6.8 -3 H-2.6 C-4 -7.4 2.4 -7.4 1 -3 H3.6 V-0.4 C8 -1.8 8 4.2 3.6 2.8 V7 H0.6 C1.6 3.8 -3 3.8 -2 7 H-6.8 V3 C-3.8 4 -3.8 -0.6 -6.8 0.4 Z" fill="#62b75a" stroke="#4a9e45" stroke-width="0.9" stroke-linejoin="round"/><path d="M-5.6 -1.8 H2.4 V5.8" fill="none" stroke="#8fd487" stroke-width="0.8" opacity="0.8"/></svg>
<svg style="left:323.8px;top:164.5px" width="5" height="25" viewBox="0 0 5 25"><path d="M0.9 2 L2.5 0.4" stroke="#fff" stroke-width="1.2"/><path d="M1.6 2.8 L3.4 1.2" stroke="#a9a9a9" stroke-width="1.5"/><path d="M0.9 6 L2.5 4.4" stroke="#fff" stroke-width="1.2"/><path d="M1.6 6.8 L3.4 5.2" stroke="#a9a9a9" stroke-width="1.5"/><path d="M0.9 10 L2.5 8.4" stroke="#fff" stroke-width="1.2"/><path d="M1.6 10.8 L3.4 9.2" stroke="#a9a9a9" stroke-width="1.5"/><path d="M0.9 14 L2.5 12.4" stroke="#fff" stroke-width="1.2"/><path d="M1.6 14.8 L3.4 13.2" stroke="#a9a9a9" stroke-width="1.5"/><path d="M0.9 18 L2.5 16.4" stroke="#fff" stroke-width="1.2"/><path d="M1.6 18.8 L3.4 17.2" stroke="#a9a9a9" stroke-width="1.5"/><path d="M0.9 22 L2.5 20.4" stroke="#fff" stroke-width="1.2"/><path d="M1.6 22.8 L3.4 21.2" stroke="#a9a9a9" stroke-width="1.5"/></svg>
<svg style="left:520.8px;top:164.5px" width="5" height="25" viewBox="0 0 5 25"><path d="M0.9 2 L2.5 0.4" stroke="#fff" stroke-width="1.2"/><path d="M1.6 2.8 L3.4 1.2" stroke="#a9a9a9" stroke-width="1.5"/><path d="M0.9 6 L2.5 4.4" stroke="#fff" stroke-width="1.2"/><path d="M1.6 6.8 L3.4 5.2" stroke="#a9a9a9" stroke-width="1.5"/><path d="M0.9 10 L2.5 8.4" stroke="#fff" stroke-width="1.2"/><path d="M1.6 10.8 L3.4 9.2" stroke="#a9a9a9" stroke-width="1.5"/><path d="M0.9 14 L2.5 12.4" stroke="#fff" stroke-width="1.2"/><path d="M1.6 14.8 L3.4 13.2" stroke="#a9a9a9" stroke-width="1.5"/><path d="M0.9 18 L2.5 16.4" stroke="#fff" stroke-width="1.2"/><path d="M1.6 18.8 L3.4 17.2" stroke="#a9a9a9" stroke-width="1.5"/><path d="M0.9 22 L2.5 20.4" stroke="#fff" stroke-width="1.2"/><path d="M1.6 22.8 L3.4 21.2" stroke="#a9a9a9" stroke-width="1.5"/></svg>
<div class="selbtn" style="left:530px;top:164px;width:23px;height:22px;"></div>
<svg style="left:332px;top:162.5px" width="24" height="24" viewBox="-12 -12 24 24"><path d="M-2.6 -5 L-2.6 3 L-0.9 1.6 L1 5.2 L2.6 4.4 L0.8 0.9 L2.9 0.7 Z" fill="#8f93d6" stroke="#000" stroke-width="1" stroke-linejoin="miter"/></svg>
<svg style="left:361px;top:162.5px" width="24" height="24" viewBox="-12 -12 24 24"><g transform="scale(1.13 1)"><path d="M-3.2 8 C-4.6 5.4 -7.2 2.6 -8 0.8 C-8.4 -0.6 -6.8 -1.4 -5.8 -0.2 L-4 2 V-5.4 C-4 -7 -1.9 -7 -1.9 -5.4 V-6.8 C-1.9 -8.4 0.3 -8.4 0.3 -6.8 V-6 C0.3 -7.6 2.5 -7.6 2.5 -6 V-4.6 C2.5 -6 4.6 -6 4.6 -4.4 L4.7 2 C4.7 4.6 4 6 3.2 8 Z" fill="#fff" stroke="#000" stroke-width="1" stroke-linejoin="round"/><path d="M-1.9 -5.4 V-0.6 M0.3 -6 V-0.8 M2.5 -5 V-0.6" stroke="#000" stroke-width="0.9"/></g></svg>
<svg style="left:384px;top:162.5px" width="24" height="24" viewBox="-12 -12 24 24"><path d="M0.2 0.8 L5.2 5.2" stroke="#3a2412" stroke-width="3" stroke-linecap="round"/><path d="M1 1.6 L5.2 5.2" stroke="#c0712c" stroke-width="1.7" stroke-linecap="round"/><circle cx="-2.7" cy="-2" r="3.9" fill="#c9cbea" stroke="#2a2c63" stroke-width="1.2"/><path d="M-5 -2 H-0.4 M-2.7 -4.3 V0.3" stroke="#000" stroke-width="1.2"/></svg>
<svg style="left:407px;top:162.5px" width="24" height="24" viewBox="-12 -12 24 24"><path d="M0.2 0.8 L5.2 5.2" stroke="#3a2412" stroke-width="3" stroke-linecap="round"/><path d="M1 1.6 L5.2 5.2" stroke="#c0712c" stroke-width="1.7" stroke-linecap="round"/><circle cx="-2.7" cy="-2" r="3.9" fill="#c9cbea" stroke="#2a2c63" stroke-width="1.2"/><path d="M-5 -2 H-0.4" stroke="#2a2c63" stroke-width="1.3"/></svg>
<svg style="left:430px;top:162.5px" width="24" height="24" viewBox="-12 -12 24 24"><path d="M0.2 0.8 L5.2 5.2" stroke="#3a2412" stroke-width="3" stroke-linecap="round"/><path d="M1 1.6 L5.2 5.2" stroke="#c0712c" stroke-width="1.7" stroke-linecap="round"/><circle cx="-2.7" cy="-2" r="3.9" fill="#c9cbea" stroke="#2a2c63" stroke-width="1.2"/><circle cx="-2.7" cy="-2" r="2.4" fill="#dcdcf2" opacity="0.7"/></svg>
<svg style="left:459px;top:162.5px" width="24" height="24" viewBox="-12 -12 24 24"><rect x="-6.8" y="-7.5" width="13.6" height="10.6" rx="1" fill="#d9d9d9" stroke="#b5b5b5" stroke-width="0.8"/><rect x="-5.2" y="-6" width="10.4" height="7.5" fill="#4f8edc"/><path d="M-5.2 -6 H5.2 V-3 L-5.2 0 Z" fill="#6ea4e6"/><path d="M-1.6 3.1 H1.6 V5 H-1.6Z" fill="#c9c9c9"/><rect x="-4" y="5" width="8" height="1.8" rx="0.6" fill="#e6e6e6" stroke="#b5b5b5" stroke-width="0.6"/></svg>
<svg style="left:488.5px;top:162.5px" width="24" height="24" viewBox="-12 -12 24 24"><path d="M-6.6 -7.4 L7.6 7 H-6.6 Z M-3.4 -0.6 L2 4.2 H-3.4 Z" fill="#dcae78" fill-rule="evenodd" stroke="#c4925a" stroke-width="0.9" stroke-linejoin="round"/><path d="M-5 7 V5.4 M-2.6 7 V5.4 M-0.2 7 V5.4 M2.2 7 V5.4 M4.6 7 V5.8" stroke="#b07c44" stroke-width="0.7"/></svg>
<svg style="left:529.5px;top:162.5px" width="24" height="24" viewBox="-12 -12 24 24"><path d="M0 -7 V7 M-7 0 H7" stroke="#000" stroke-width="1.5"/><path d="M0 -8 L2.7 -4.6 H-2.7 Z M0 8 L2.7 4.6 H-2.7 Z M-8 0 L-4.6 -2.7 V2.7 Z M8 0 L4.6 -2.7 V2.7 Z" fill="#000"/></svg>
<svg style="left:551.5px;top:162.5px" width="24" height="24" viewBox="-12 -12 24 24"><path d="M-4.6 -4.2 C-1 -8 6 -6 5.6 -0.6 C5.2 4 0 4.6 -2.4 3.6 L-2.4 1.2 C0.6 2 3 0.8 2.8 -1.2 C2.6 -3.8 -1 -4 -2.6 -2.4 Z" fill="#9093d6" stroke="#1a1a40" stroke-width="0.9" stroke-linejoin="round"/><path d="M-2 -0.6 L-6.8 3.2 L-1.6 6.4 Z" fill="#9093d6" stroke="#1a1a40" stroke-width="0.9" stroke-linejoin="round"/></svg>
<svg style="left:575px;top:162.5px" width="24" height="24" viewBox="-12 -12 24 24"><rect x="-6" y="-6" width="5" height="5" fill="#fff" stroke="#000" stroke-width="1"/><rect x="1.6" y="1.2" width="4.6" height="4.6" fill="#fff" stroke="#000" stroke-width="1"/><rect x="-3.6" y="-3.8" width="7.6" height="7.4" fill="#cfd0f0" stroke="#000" stroke-width="1.3"/></svg>
<svg style="left:598px;top:162.5px" width="24" height="24" viewBox="-12 -12 24 24"><rect x="-3.6" y="-3.8" width="7.6" height="7.4" fill="#cfd0f0" stroke="#000" stroke-width="1.3"/><rect x="-6" y="-6" width="4.6" height="4.6" fill="#a9a9a9" stroke="#000" stroke-width="1"/><rect x="1.8" y="1.6" width="4.4" height="4.4" fill="#a9a9a9" stroke="#000" stroke-width="1"/></svg>
<svg style="left:620.5px;top:162.5px" width="24" height="24" viewBox="-12 -12 24 24"><path d="M-6.2 3.8 L-3.6 -3.4 L0.2 -1.2 L5.8 -5.6 L4 3.2 L0 1.4 Z" fill="#fff" stroke="#000" stroke-width="1" stroke-linejoin="round"/></svg>
<svg style="left:650px;top:162.5px" width="24" height="24" viewBox="-12 -12 24 24"><path d="M-8 -7 H-2.4 L0.2 -4.4 V4 H-8 Z" fill="#b3b3b3"/><path d="M-2 -3.4 H4.4 L7.4 -0.4 V7.8 H-2 Z" fill="#b3b3b3" stroke="#f0f0f0" stroke-width="0.8"/></svg>
<svg style="left:672.5px;top:162.5px" width="24" height="24" viewBox="-12 -12 24 24"><path d="M-4.6 3 V-2.8 H3" fill="none" stroke="#000" stroke-width="2.2"/><path d="M4.6 -3 V2.8 H-3" fill="none" stroke="#000" stroke-width="2.2"/><path d="M-7.6 -0.4 L-4.6 -4.6 L-1.6 -0.4 Z M7.6 0.4 L4.6 4.6 L1.6 0.4 Z" fill="#000"/></svg>
<svg style="left:693.5px;top:162.5px" width="24" height="24" viewBox="-12 -12 24 24"><circle r="7.3" fill="#d42a30"/><circle r="6.5" fill="none" stroke="#f29a9a" stroke-width="0.8" opacity="0.85"/><circle r="4.9" fill="#fdeeee"/><path d="M-3.9 -1.2 L1.2 3.9 M-1.2 -3.9 L3.9 1.2" stroke="#d8343a" stroke-width="1.3"/><circle r="7.3" fill="none" stroke="#a8141c" stroke-width="0.7"/></svg>
<svg style="left:716.5px;top:162.5px" width="24" height="24" viewBox="-12 -12 24 24"><circle r="8" fill="#9c9c9c"/><path d="M-3.6 0.4 L-1 3 L3.8 -2.4" fill="none" stroke="#b9b9b9" stroke-width="1.8"/></svg>
<svg style="left:738.5px;top:162.5px" width="24" height="24" viewBox="-12 -12 24 24"><path d="M-6.4 4.6 V-4.4 H-2.6 L-1.2 -2.8 H4 V-0.6 M-6.4 4.6 L-3.6 -0.6 H7 L4.2 4.6 Z" fill="#fff" stroke="#000" stroke-width="1.2" stroke-linejoin="round"/></svg>
<svg style="left:761px;top:162.5px" width="24" height="24" viewBox="-12 -12 24 24"><g shape-rendering="crispEdges"><rect x="-5.5" y="-5" width="11" height="11" fill="none" stroke="#222" stroke-width="0.8"/><path d="M-6.6 -6.2 h2.2v2.2h-2.2z M4.4 -6.2 h2.2v2.2h-2.2z M-6.6 4.9 h2.2v2.2h-2.2z M4.4 4.9 h2.2v2.2h-2.2z" fill="#000"/></g></svg>
<svg style="left:783.5px;top:162.5px" width="24" height="24" viewBox="-12 -12 24 24"><path d="M-3.6 -7.4 V3.6 H7.4" fill="none" stroke="#000" stroke-width="2.2"/><path d="M-7.4 -3.4 H3.6 V7.4" fill="none" stroke="#000" stroke-width="2.2"/><path d="M-3.2 3.2 L6.2 -6.4" stroke="#000" stroke-width="1"/></svg>
<svg style="left:807px;top:162.5px" width="24" height="24" viewBox="-12 -12 24 24"><rect x="-5.6" y="-4" width="9.6" height="9.6" rx="1" fill="none" stroke="#7c7c7c" stroke-width="1.8"/><path d="M-6.4 6.4 L6.6 -6.6" stroke="#000" stroke-width="1.3"/><path d="M7.6 -7.6 L3 -6.6 L6.6 -3 Z M-7.4 7.4 L-2.8 6.4 L-6.4 2.8 Z" fill="#000"/></svg>
<svg style="left:835px;top:162.5px" width="24" height="24" viewBox="-12 -12 24 24"><path d="M-6.2 3.6 L-3.8 -3.4 L0 -1.6 L5.8 -5.4 L4 3 L0 1.6 Z" fill="none" stroke="#9b9b9b" stroke-width="1" stroke-linejoin="round"/></svg>
<svg style="left:858.5px;top:162.5px" width="24" height="24" viewBox="-12 -12 24 24"><text x="0" y="6" text-anchor="middle" font-family="Liberation Serif, serif" font-weight="bold" font-size="18.5" fill="#999">A</text></svg>
<svg style="left:881.5px;top:162.5px" width="24" height="24" viewBox="-12 -12 24 24"><g shape-rendering="crispEdges"><rect x="-5.4" y="-5.2" width="11.6" height="10.2" fill="none" stroke="#6e6e6e" stroke-width="1"/></g></svg>
<svg style="left:905px;top:162.5px" width="24" height="24" viewBox="-12 -12 24 24"><ellipse cx="0" cy="0.4" rx="7.8" ry="5.8" fill="none" stroke="#6e6e6e" stroke-width="1"/></svg>
<svg style="left:928px;top:162.5px" width="24" height="24" viewBox="-12 -12 24 24"><path d="M-6 -5.6 L6 6.4" stroke="#7a7a7a" stroke-width="1"/></svg>
<svg style="left:951px;top:162.5px" width="24" height="24" viewBox="-12 -12 24 24"><path d="M-5.6 -5.4 L6 6.4" stroke="#6a6a6a" stroke-width="1"/><path d="M-6.2 -6 L-1.6 -5 M-6.2 -6 L-5.2 -1.4" stroke="#6a6a6a" stroke-width="1"/></svg>
<svg style="left:974px;top:162.5px" width="24" height="24" viewBox="-12 -12 24 24"><rect x="-7.6" y="-7.6" width="15" height="15" fill="#fff" stroke="#dedede" stroke-width="0.6"/><rect x="-6.4" y="-6.4" width="12.8" height="12.8" fill="#3a8ee8" stroke="#7d7d7d" stroke-width="0.9"/><path d="M-6 -3 Q0 -5 6 -3.4 V-1 H-6 Z" fill="#9fd4f6"/><path d="M-6 6 V-0.6 Q-2 -3 1.4 0 Q3.6 -1.6 6 0.4 V6 Z" fill="#1f7a1f"/><path d="M-1 6 Q2 2 6 2.4 V6 Z" fill="#cfe08a"/></svg>
<svg style="left:997.5px;top:162.5px" width="24" height="24" viewBox="-12 -12 24 24"><rect x="-7.6" y="2.6" width="4.3" height="4.1" fill="#6aab55" stroke="#9fd08e" stroke-width="0.6"/><rect x="-7.6" y="-2.4" width="4.3" height="4.1" fill="#6aab55" stroke="#9fd08e" stroke-width="0.6"/><rect x="-2.45" y="-7.4" width="4.3" height="4.1" fill="#6aab55" stroke="#9fd08e" stroke-width="0.6"/><rect x="-2.45" y="-2.4" width="4.3" height="4.1" fill="#6aab55" stroke="#9fd08e" stroke-width="0.6"/><rect x="-2.45" y="2.6" width="4.3" height="4.1" fill="#6aab55" stroke="#9fd08e" stroke-width="0.6"/><rect x="2.7" y="-7.4" width="4.3" height="4.1" fill="#6aab55" stroke="#9fd08e" stroke-width="0.6"/><rect x="2.7" y="-2.4" width="4.3" height="4.1" fill="#6aab55" stroke="#9fd08e" stroke-width="0.6"/><rect x="2.7" y="2.6" width="4.3" height="4.1" fill="#6aab55" stroke="#9fd08e" stroke-width="0.6"/><path d="M-4.8 -3.2 L-2.8 -5.4 V-3.2 Z" fill="#6aab55"/></svg>
<div class="sep" style="left:358px;top:164.5px;width:1px;height:20px;"></div>
<div class="sepw" style="left:359px;top:164.5px;width:1px;height:20px;"></div>
<div class="sep" style="left:456px;top:164.5px;width:1px;height:20px;"></div>
<div class="sepw" style="left:457px;top:164.5px;width:1px;height:20px;"></div>
<div class="sep" style="left:485px;top:164.5px;width:1px;height:20px;"></div>
<div class="sepw" style="left:486px;top:164.5px;width:1px;height:20px;"></div>
<div class="sep" style="left:647px;top:164.5px;width:1px;height:20px;"></div>
<div class="sepw" style="left:648px;top:164.5px;width:1px;height:20px;"></div>
<div class="sep" style="left:833px;top:164.5px;width:1px;height:20px;"></div>
<div class="sepw" style="left:834px;top:164.5px;width:1px;height:20px;"></div>
<svg style="left:323.8px;top:194.7px" width="5" height="25" viewBox="0 0 5 25"><path d="M0.9 2 L2.5 0.4" stroke="#fff" stroke-width="1.2"/><path d="M1.6 2.8 L3.4 1.2" stroke="#a9a9a9" stroke-width="1.5"/><path d="M0.9 6 L2.5 4.4" stroke="#fff" stroke-width="1.2"/><path d="M1.6 6.8 L3.4 5.2" stroke="#a9a9a9" stroke-width="1.5"/><path d="M0.9 10 L2.5 8.4" stroke="#fff" stroke-width="1.2"/><path d="M1.6 10.8 L3.4 9.2" stroke="#a9a9a9" stroke-width="1.5"/><path d="M0.9 14 L2.5 12.4" stroke="#fff" stroke-width="1.2"/><path d="M1.6 14.8 L3.4 13.2" stroke="#a9a9a9" stroke-width="1.5"/><path d="M0.9 18 L2.5 16.4" stroke="#fff" stroke-width="1.2"/><path d="M1.6 18.8 L3.4 17.2" stroke="#a9a9a9" stroke-width="1.5"/><path d="M0.9 22 L2.5 20.4" stroke="#fff" stroke-width="1.2"/><path d="M1.6 22.8 L3.4 21.2" stroke="#a9a9a9" stroke-width="1.5"/></svg>
<div class="selbtn" style="left:651px;top:194px;width:22px;height:22px;"></div>
<div class="selbtn" style="left:674.5px;top:194px;width:22.5px;height:22px;"></div>
<div class="selbtn" style="left:703px;top:195px;width:101px;height:20px;"></div>
<span class="t " style="left:705.8px;top:198.3px;letter-spacing:-0.06px">Achtergrond sluiten</span>
<svg style="left:332px;top:192.7px" width="24" height="24" viewBox="-12 -12 24 24"><path d="M-2.6 -7.6 V8 M-8 2.8 H8 M-8 -2.2 H-2.6" stroke="#8a8a8a" stroke-width="0.9"/><path d="M-5 0.4 l2.8 2.6 l6 -5.8" fill="none" stroke="#000" stroke-width="2.1" stroke-linejoin="miter"/></svg>
<svg style="left:355px;top:192.7px" width="24" height="24" viewBox="-12 -12 24 24"><rect x="-8.5" y="-8.1" width="1.1" height="1.1" fill="#000"/><rect x="-8.5" y="-3" width="1.1" height="1.1" fill="#000"/><rect x="-8.5" y="2.1" width="1.1" height="1.1" fill="#000"/><rect x="-8.5" y="7.2" width="1.1" height="1.1" fill="#000"/><rect x="-3.4" y="-8.1" width="1.1" height="1.1" fill="#000"/><rect x="-3.4" y="7.2" width="1.1" height="1.1" fill="#000"/><rect x="1.7" y="-8.1" width="1.1" height="1.1" fill="#000"/><rect x="1.7" y="7.2" width="1.1" height="1.1" fill="#000"/><rect x="6.8" y="-8.1" width="1.1" height="1.1" fill="#000"/><rect x="6.8" y="-3" width="1.1" height="1.1" fill="#000"/><rect x="6.8" y="2.1" width="1.1" height="1.1" fill="#000"/><rect x="6.8" y="7.2" width="1.1" height="1.1" fill="#000"/><path d="M-4.4 -0.4 l2.8 2.6 l6 -5.8" fill="none" stroke="#000" stroke-width="2.1" stroke-linejoin="miter"/></svg>
<svg style="left:378px;top:192.7px" width="24" height="24" viewBox="-12 -12 24 24"><rect x="-1.6" y="-5.2" width="8.4" height="8.4" fill="#c9c9c9" stroke="#8c8c8c" stroke-width="0.9"/><rect x="-5.4" y="-1.8" width="9" height="8.8" fill="#f6f6f6" stroke="#8c8c8c" stroke-width="0.9"/><path d="M-7.6 4.2 l2.8 2.6 l6 -5.8" fill="none" stroke="#000" stroke-width="2.1" stroke-linejoin="miter"/></svg>
<svg style="left:406.5px;top:192.7px" width="24" height="24" viewBox="-12 -12 24 24"><rect x="-6" y="-5.8" width="1.2" height="1.2" fill="#222"/><rect x="-6" y="-0.8" width="1.2" height="1.2" fill="#222"/><rect x="-6" y="4.2" width="1.2" height="1.2" fill="#222"/><rect x="-0.7" y="-5.8" width="1.2" height="1.2" fill="#222"/><rect x="-0.7" y="-0.8" width="1.2" height="1.2" fill="#222"/><rect x="-0.7" y="4.2" width="1.2" height="1.2" fill="#222"/><rect x="4.6" y="-5.8" width="1.2" height="1.2" fill="#222"/><rect x="4.6" y="-0.8" width="1.2" height="1.2" fill="#222"/><rect x="4.6" y="4.2" width="1.2" height="1.2" fill="#222"/></svg>
<svg style="left:427px;top:192.7px" width="24" height="24" viewBox="-12 -12 24 24"><path d="M-3.4 7 Q-4.6 2.8 0.6 1.2" fill="none" stroke="#000" stroke-width="2"/><path d="M-2.4 -1.4 H3.2 V4.4 Z" fill="#000"/></svg>
<svg style="left:471px;top:192.7px" width="24" height="24" viewBox="-12 -12 24 24"><rect x="-8" y="-7.4" width="15.6" height="15" fill="#fff"/><path d="M0 -7 A7 7 0 0 1 7 0 V-7 Z" fill="#f01010"/><rect x="-6.8" y="-6.2" width="13" height="13" fill="#fff"/><rect x="-6.8" y="-6.2" width="3.2" height="3.2" fill="#ffe000"/><rect x="-3.55" y="-6.2" width="3.2" height="3.2" fill="#f01010"/><rect x="2.95" y="-6.2" width="3.2" height="3.2" fill="#f01010"/><rect x="-6.8" y="-2.95" width="3.2" height="3.2" fill="#ffe000"/><rect x="-0.3" y="-2.95" width="3.2" height="3.2" fill="#ffe000"/><rect x="2.95" y="-2.95" width="3.2" height="3.2" fill="#f01010"/><rect x="-3.55" y="0.3" width="3.2" height="3.2" fill="#ffe000"/><rect x="-0.3" y="0.3" width="3.2" height="3.2" fill="#f01010"/><rect x="2.95" y="0.3" width="3.2" height="3.2" fill="#ffe000"/><rect x="-6.8" y="3.55" width="3.2" height="3.2" fill="#fff"/><rect x="-3.55" y="3.55" width="3.2" height="3.2" fill="#f01010"/><rect x="-0.3" y="3.55" width="3.2" height="3.2" fill="#ffe000"/><path d="M-6.8 -6.8 V7.4 M-7.4 -6.2 H6.8" stroke="#000" stroke-width="1.05"/><path d="M-3.55 -6.8 V7.4 M-7.4 -2.95 H6.8" stroke="#000" stroke-width="1.05"/><path d="M-0.3 -6.8 V7.4 M-7.4 0.3 H6.8" stroke="#000" stroke-width="1.05"/><path d="M2.95 -6.8 V7.4 M-7.4 3.55 H6.8" stroke="#000" stroke-width="1.05"/><path d="M6.2 -6.8 V7.4 M-7.4 6.8 H6.8" stroke="#000" stroke-width="1.05"/><rect x="-7.1" y="-6.5" width="13.6" height="13.6" fill="none" stroke="#000" stroke-width="1.5"/></svg>
<svg style="left:494px;top:192.7px" width="24" height="24" viewBox="-12 -12 24 24"><circle r="5.6" fill="none" stroke="#f01010" stroke-width="3.6"/><circle r="4.9" fill="none" stroke="#ffe000" stroke-width="1.7"/></svg>
<svg style="left:516.5px;top:192.7px" width="24" height="24" viewBox="-12 -12 24 24"><rect x="-4.2" y="-4.6" width="8.4" height="8.4" fill="#fff" stroke="#000" stroke-width="1.1"/><circle cx="-4.2" cy="-1.2" r="1.3" fill="#fff" stroke="#e00000" stroke-width="0.9"/><circle cx="4.2" cy="0.8" r="1.3" fill="#fff" stroke="#e00000" stroke-width="0.9"/></svg>
<svg style="left:539.5px;top:192.7px" width="24" height="24" viewBox="-12 -12 24 24"><circle r="5.8" fill="#f8efcf" stroke="#000" stroke-width="1.1"/><path d="M0 -7.8 L2.2 -4.6 H-2.2 Z M0 7.8 L2.2 4.6 H-2.2 Z M-7.8 0 L-4.6 -2.2 V2.2 Z M7.8 0 L4.6 -2.2 V2.2 Z" fill="#000"/><path d="M-2.2 3.6 L2.4 -3.6" stroke="#f01010" stroke-width="1.4"/></svg>
<svg style="left:581px;top:192.7px" width="24" height="24" viewBox="-12 -12 24 24"><rect x="-8" y="-7.6" width="16" height="15.6" fill="#fff"/><path d="M-8 -7.6 H8 V-5 H-5.4 V8 H-8 Z" fill="#ffc600"/><path d="M-3 -7.6 V8 M1 -7.6 V8 M5 -7.6 V8 M-8 -2.4 H8 M-8 1.6 H8 M-8 5.6 H8" stroke="#0000ee" stroke-width="1.2"/><path d="M-2 -7.4 h2 v1.8 h-2z M2.4 -7.4 h2 v1.8 h-2z M-7.6 -1.4 h1.8 v2 h-1.8z M-7.6 3 h1.8 v2 h-1.8z" fill="#000"/></svg>
<svg style="left:604px;top:192.7px" width="24" height="24" viewBox="-12 -12 24 24"><rect x="-7.4" y="-7.4" width="14.8" height="14.8" fill="#fff" stroke="#000" stroke-width="1.3"/><path d="M0 -5 V5.6 M-5.4 -1.2 H5.4" stroke="#000" stroke-width="1.2"/><path d="M0 -6.8 L2.4 -3.6 H-2.4 Z M0 7 L2.4 3.8 H-2.4 Z M-6.8 -1.2 L-3.6 -3.6 V1.2 Z M6.8 -1.2 L3.6 -3.6 V1.2 Z" fill="#000"/></svg>
<svg style="left:627px;top:192.7px" width="24" height="24" viewBox="-12 -12 24 24"><path d="M-1.6 -6 V5 M-1.6 2.6 H6" stroke="#000" stroke-width="1.2"/><path d="M-1.6 -8 L0.8 -4.6 H-4 Z M8 2.6 L4.6 0.2 V5 Z" fill="#000"/><ellipse cx="-5.6" cy="2" rx="1.2" ry="1.9" fill="none" stroke="#000" stroke-width="0.8"/><ellipse cx="-0.8" cy="6" rx="1.2" ry="1.9" fill="none" stroke="#000" stroke-width="0.8"/></svg>
<svg style="left:650px;top:192.7px" width="24" height="24" viewBox="-12 -12 24 24"><path d="M-7.8 -2.6 V4 H7.8 V-2.6 H6.6 V1 H3 V-0.6 H2 V1 H-2 V-0.6 H-3 V1 H-6.6 V-2.6 Z" fill="#000"/></svg>
<svg style="left:673.5px;top:192.7px" width="24" height="24" viewBox="-12 -12 24 24"><path d="M-0.6 -6 V9 M-8 2 H7 M-5.8 -3.2 L4.6 7.2 M4.6 -3.2 L-5.8 7.2" stroke="#000" stroke-width="1.15"/><path d="M-0.6 -8.4 L1.8 -4.8 H-3 Z" fill="#000"/><text x="2.6" y="-2.6" font-family="Liberation Sans, sans-serif" font-weight="bold" font-size="6.5">N</text></svg>
<svg style="left:821px;top:192.7px" width="24" height="24" viewBox="-12 -12 24 24"><path d="M-7.8 -3.3 L-3 -7.4 V-4.6 H4.6 V-2 H-3 V0.8 Z" fill="#fdf0bd" stroke="#d9971f" stroke-width="1" stroke-linejoin="round"/><path d="M7.8 3.3 L3 -0.8 V2 H-4.6 V4.6 H3 V7.4 Z" fill="#fdf0bd" stroke="#d9971f" stroke-width="1" stroke-linejoin="round"/></svg>
<svg style="left:844px;top:192.7px" width="24" height="24" viewBox="-12 -12 24 24"><g transform="scale(0.92)"><path d="M-4.9 -1.2 A5 5 0 1 1 -1.4 5" fill="none" stroke="#3f8f3f" stroke-width="3.3"/><path d="M-4.9 -1.2 A5 5 0 1 1 -1.4 5" fill="none" stroke="#7cc873" stroke-width="2"/><path d="M-0.8 1.6 L-6.8 4.6 L-1.6 8.4 Z" fill="#62b65a" stroke="#3f8f3f" stroke-width="0.7" stroke-linejoin="round"/><path d="M-1.8 0.4 A1.9 1.9 0 1 1 1.2 1.4" fill="none" stroke="#4a9c47" stroke-width="1.3"/></g></svg>
<svg style="left:885px;top:192.7px" width="24" height="24" viewBox="-12 -12 24 24"><rect x="-7.6" y="-2.6" width="15.4" height="5.4" fill="#000"/></svg>
<svg style="left:908px;top:192.7px" width="24" height="24" viewBox="-12 -12 24 24"><rect x="-7.8" y="-0.8" width="15.6" height="1.8" fill="#000"/></svg>
<svg style="left:931px;top:192.7px" width="24" height="24" viewBox="-12 -12 24 24"><rect x="-7.8" y="-1.6" width="15.6" height="3.4" fill="#f01010"/></svg>
<svg style="left:954px;top:192.7px" width="24" height="24" viewBox="-12 -12 24 24"><rect x="-8" y="-8" width="16" height="16" fill="#fff"/><path d="M-7.8 0.2 H7.8" stroke="#000" stroke-width="2" stroke-dasharray="3.4 2.6"/></svg>
<div class="sep" style="left:404px;top:194.7px;width:1px;height:20px;"></div>
<div class="sepw" style="left:405px;top:194.7px;width:1px;height:20px;"></div>
<div class="sep" style="left:699px;top:194.7px;width:1px;height:20px;"></div>
<div class="sepw" style="left:700px;top:194.7px;width:1px;height:20px;"></div>
<svg style="left:462.8px;top:194.7px" width="5" height="25" viewBox="0 0 5 25"><path d="M0.9 2 L2.5 0.4" stroke="#fff" stroke-width="1.2"/><path d="M1.6 2.8 L3.4 1.2" stroke="#a9a9a9" stroke-width="1.5"/><path d="M0.9 6 L2.5 4.4" stroke="#fff" stroke-width="1.2"/><path d="M1.6 6.8 L3.4 5.2" stroke="#a9a9a9" stroke-width="1.5"/><path d="M0.9 10 L2.5 8.4" stroke="#fff" stroke-width="1.2"/><path d="M1.6 10.8 L3.4 9.2" stroke="#a9a9a9" stroke-width="1.5"/><path d="M0.9 14 L2.5 12.4" stroke="#fff" stroke-width="1.2"/><path d="M1.6 14.8 L3.4 13.2" stroke="#a9a9a9" stroke-width="1.5"/><path d="M0.9 18 L2.5 16.4" stroke="#fff" stroke-width="1.2"/><path d="M1.6 18.8 L3.4 17.2" stroke="#a9a9a9" stroke-width="1.5"/><path d="M0.9 22 L2.5 20.4" stroke="#fff" stroke-width="1.2"/><path d="M1.6 22.8 L3.4 21.2" stroke="#a9a9a9" stroke-width="1.5"/></svg>
<svg style="left:572.8px;top:194.7px" width="5" height="25" viewBox="0 0 5 25"><path d="M0.9 2 L2.5 0.4" stroke="#fff" stroke-width="1.2"/><path d="M1.6 2.8 L3.4 1.2" stroke="#a9a9a9" stroke-width="1.5"/><path d="M0.9 6 L2.5 4.4" stroke="#fff" stroke-width="1.2"/><path d="M1.6 6.8 L3.4 5.2" stroke="#a9a9a9" stroke-width="1.5"/><path d="M0.9 10 L2.5 8.4" stroke="#fff" stroke-width="1.2"/><path d="M1.6 10.8 L3.4 9.2" stroke="#a9a9a9" stroke-width="1.5"/><path d="M0.9 14 L2.5 12.4" stroke="#fff" stroke-width="1.2"/><path d="M1.6 14.8 L3.4 13.2" stroke="#a9a9a9" stroke-width="1.5"/><path d="M0.9 18 L2.5 16.4" stroke="#fff" stroke-width="1.2"/><path d="M1.6 18.8 L3.4 17.2" stroke="#a9a9a9" stroke-width="1.5"/><path d="M0.9 22 L2.5 20.4" stroke="#fff" stroke-width="1.2"/><path d="M1.6 22.8 L3.4 21.2" stroke="#a9a9a9" stroke-width="1.5"/></svg>
<svg style="left:812.8px;top:194.7px" width="5" height="25" viewBox="0 0 5 25"><path d="M0.9 2 L2.5 0.4" stroke="#fff" stroke-width="1.2"/><path d="M1.6 2.8 L3.4 1.2" stroke="#a9a9a9" stroke-width="1.5"/><path d="M0.9 6 L2.5 4.4" stroke="#fff" stroke-width="1.2"/><path d="M1.6 6.8 L3.4 5.2" stroke="#a9a9a9" stroke-width="1.5"/><path d="M0.9 10 L2.5 8.4" stroke="#fff" stroke-width="1.2"/><path d="M1.6 10.8 L3.4 9.2" stroke="#a9a9a9" stroke-width="1.5"/><path d="M0.9 14 L2.5 12.4" stroke="#fff" stroke-width="1.2"/><path d="M1.6 14.8 L3.4 13.2" stroke="#a9a9a9" stroke-width="1.5"/><path d="M0.9 18 L2.5 16.4" stroke="#fff" stroke-width="1.2"/><path d="M1.6 18.8 L3.4 17.2" stroke="#a9a9a9" stroke-width="1.5"/><path d="M0.9 22 L2.5 20.4" stroke="#fff" stroke-width="1.2"/><path d="M1.6 22.8 L3.4 21.2" stroke="#a9a9a9" stroke-width="1.5"/></svg>
<svg style="left:876.8px;top:194.7px" width="5" height="25" viewBox="0 0 5 25"><path d="M0.9 2 L2.5 0.4" stroke="#fff" stroke-width="1.2"/><path d="M1.6 2.8 L3.4 1.2" stroke="#a9a9a9" stroke-width="1.5"/><path d="M0.9 6 L2.5 4.4" stroke="#fff" stroke-width="1.2"/><path d="M1.6 6.8 L3.4 5.2" stroke="#a9a9a9" stroke-width="1.5"/><path d="M0.9 10 L2.5 8.4" stroke="#fff" stroke-width="1.2"/><path d="M1.6 10.8 L3.4 9.2" stroke="#a9a9a9" stroke-width="1.5"/><path d="M0.9 14 L2.5 12.4" stroke="#fff" stroke-width="1.2"/><path d="M1.6 14.8 L3.4 13.2" stroke="#a9a9a9" stroke-width="1.5"/><path d="M0.9 18 L2.5 16.4" stroke="#fff" stroke-width="1.2"/><path d="M1.6 18.8 L3.4 17.2" stroke="#a9a9a9" stroke-width="1.5"/><path d="M0.9 22 L2.5 20.4" stroke="#fff" stroke-width="1.2"/><path d="M1.6 22.8 L3.4 21.2" stroke="#a9a9a9" stroke-width="1.5"/></svg>
<svg style="left:323.8px;top:224.8px" width="5" height="25" viewBox="0 0 5 25"><path d="M0.9 2 L2.5 0.4" stroke="#fff" stroke-width="1.2"/><path d="M1.6 2.8 L3.4 1.2" stroke="#a9a9a9" stroke-width="1.5"/><path d="M0.9 6 L2.5 4.4" stroke="#fff" stroke-width="1.2"/><path d="M1.6 6.8 L3.4 5.2" stroke="#a9a9a9" stroke-width="1.5"/><path d="M0.9 10 L2.5 8.4" stroke="#fff" stroke-width="1.2"/><path d="M1.6 10.8 L3.4 9.2" stroke="#a9a9a9" stroke-width="1.5"/><path d="M0.9 14 L2.5 12.4" stroke="#fff" stroke-width="1.2"/><path d="M1.6 14.8 L3.4 13.2" stroke="#a9a9a9" stroke-width="1.5"/><path d="M0.9 18 L2.5 16.4" stroke="#fff" stroke-width="1.2"/><path d="M1.6 18.8 L3.4 17.2" stroke="#a9a9a9" stroke-width="1.5"/><path d="M0.9 22 L2.5 20.4" stroke="#fff" stroke-width="1.2"/><path d="M1.6 22.8 L3.4 21.2" stroke="#a9a9a9" stroke-width="1.5"/></svg>
<div class="selbtn" style="left:333px;top:224px;width:23px;height:22px;"></div>
<svg style="left:332px;top:222.8px" width="24" height="24" viewBox="-12 -12 24 24"><path d="M-8 -3.3 H-3 M3.4 -3.3 H8" stroke="#000" stroke-width="2.6"/><path d="M-3 -2.3 H3.4 M-3.5 -2.3 V4.6 C0.5 4.6 3.4 1.6 3.4 -2.3" fill="none" stroke="#777" stroke-width="0.8"/></svg>
<svg style="left:355px;top:222.8px" width="24" height="24" viewBox="-12 -12 24 24"><path d="M-8 -3.3 H-3.4 M3 -3.3 H8" stroke="#000" stroke-width="2.6"/><path d="M-3.4 -2.3 H3 M3.5 -2.3 V4.6 C-0.5 4.6 -3.4 1.6 -3.4 -2.3" fill="none" stroke="#8a8a8a" stroke-width="0.8"/></svg>
<svg style="left:378px;top:222.8px" width="24" height="24" viewBox="-12 -12 24 24"><path d="M-8 -2.2 H-5 M5 -2.2 H8" stroke="#000" stroke-width="2.2"/><path d="M-5 -1.5 H5 M-5 -1.5 V4.2 C-2.4 4.2 0 1.6 0 -1.4 C0 1.6 2.4 4.2 5 4.2 V-1.5" fill="none" stroke="#7d7d7d" stroke-width="0.8"/></svg>
<svg style="left:401px;top:222.8px" width="24" height="24" viewBox="-12 -12 24 24"><path d="M-7.8 0 H-4 M5 0 H8.6" stroke="#000" stroke-width="2"/><path d="M-3.4 -5.6 Q1.6 -3 1.6 0 Q1.6 3 -3.4 5.6 Z M4.6 -5.6 Q-0.4 -3 -0.4 0 Q-0.4 3 4.6 5.6 Z" fill="none" stroke="#9a9a9a" stroke-width="0.9"/><path d="M-4 0 H5" stroke="#b5b5b5" stroke-width="0.7"/></svg>
<svg style="left:424px;top:222.8px" width="24" height="24" viewBox="-12 -12 24 24"><rect x="-8" y="-7.6" width="15.8" height="15.6" fill="#fff"/><rect x="-1.7" y="-7.4" width="3.8" height="5" fill="#6b6b6b" stroke="#3f3f3f" stroke-width="0.5"/><rect x="-1.7" y="2.2" width="3.8" height="5.4" fill="#6b6b6b" stroke="#3f3f3f" stroke-width="0.5"/></svg>
<svg style="left:447px;top:222.8px" width="24" height="24" viewBox="-12 -12 24 24"><rect x="-8" y="-7.6" width="15.8" height="15.6" fill="#fff"/><rect x="-1.9" y="-7.4" width="3.8" height="5" fill="#6b6b6b" stroke="#3f3f3f" stroke-width="0.5"/><rect x="-1.9" y="2.2" width="3.8" height="5.4" fill="#6b6b6b" stroke="#3f3f3f" stroke-width="0.5"/></svg>
<svg style="left:470px;top:222.8px" width="24" height="24" viewBox="-12 -12 24 24"><rect x="-7.9" y="-7.6" width="15.8" height="15.6" fill="#fff"/><rect x="-7.9" y="-2.4" width="15.8" height="5.3" fill="#b9b9b9"/></svg>
<svg style="left:493px;top:222.8px" width="24" height="24" viewBox="-12 -12 24 24"><path d="M-6.2 -5.4 Q-9.4 0 -6.2 5.6 L6.2 -5.4 Q9.4 0 6.2 5.6 Z" fill="none" stroke="#505050" stroke-width="1.1" stroke-linejoin="round"/></svg>
<svg style="left:516px;top:222.8px" width="24" height="24" viewBox="-12 -12 24 24"><path d="M-8 -2.2 H8" stroke="#333" stroke-width="1.6"/><path d="M-4.8 1.6 H4.7" stroke="#333" stroke-width="0.9"/><path d="M4.9 1.6 L1.6 0 V3.2 Z" fill="#222"/></svg>
<svg style="left:539px;top:222.8px" width="24" height="24" viewBox="-12 -12 24 24"><g shape-rendering="crispEdges"><path d="M-8.2 -2.3 H8 M-8.2 2.7 H8" stroke="#3a3a3a" stroke-width="1"/></g></svg>
<svg style="left:562px;top:222.8px" width="24" height="24" viewBox="-12 -12 24 24"><g shape-rendering="crispEdges"><path d="M-8 -2.3 H8.2 M-8 2.7 H8.2" stroke="#3a3a3a" stroke-width="1"/></g></svg>
<svg style="left:323.8px;top:254.8px" width="5" height="25" viewBox="0 0 5 25"><path d="M0.9 2 L2.5 0.4" stroke="#fff" stroke-width="1.2"/><path d="M1.6 2.8 L3.4 1.2" stroke="#a9a9a9" stroke-width="1.5"/><path d="M0.9 6 L2.5 4.4" stroke="#fff" stroke-width="1.2"/><path d="M1.6 6.8 L3.4 5.2" stroke="#a9a9a9" stroke-width="1.5"/><path d="M0.9 10 L2.5 8.4" stroke="#fff" stroke-width="1.2"/><path d="M1.6 10.8 L3.4 9.2" stroke="#a9a9a9" stroke-width="1.5"/><path d="M0.9 14 L2.5 12.4" stroke="#fff" stroke-width="1.2"/><path d="M1.6 14.8 L3.4 13.2" stroke="#a9a9a9" stroke-width="1.5"/><path d="M0.9 18 L2.5 16.4" stroke="#fff" stroke-width="1.2"/><path d="M1.6 18.8 L3.4 17.2" stroke="#a9a9a9" stroke-width="1.5"/><path d="M0.9 22 L2.5 20.4" stroke="#fff" stroke-width="1.2"/><path d="M1.6 22.8 L3.4 21.2" stroke="#a9a9a9" stroke-width="1.5"/></svg>
<svg style="left:332px;top:252.8px" width="24" height="24" viewBox="-12 -12 24 24"><g shape-rendering="crispEdges"><path d="M-8 -3.2 H8 V3 H-8 Z" fill="none" stroke="#4a4a4a" stroke-width="0.7"/><path d="M-5.33333 -3.2 V3" stroke="#4a4a4a" stroke-width="0.6"/><path d="M-2.66667 -3.2 V3" stroke="#4a4a4a" stroke-width="0.6"/><path d="M0 -3.2 V3" stroke="#4a4a4a" stroke-width="0.6"/><path d="M2.66667 -3.2 V3" stroke="#4a4a4a" stroke-width="0.6"/><path d="M5.33333 -3.2 V3" stroke="#4a4a4a" stroke-width="0.6"/><path d="M-8 -0.1 H8" stroke="#4a4a4a" stroke-width="0.7"/><path d="M7.6 -0.1 L3.2 -2.2 V2 Z" fill="#000"/></g></svg>
<svg style="left:355px;top:252.8px" width="24" height="24" viewBox="-12 -12 24 24"><g shape-rendering="crispEdges"><rect x="-8" y="-6.8" width="16.2" height="12.8" fill="none" stroke="#4a4a4a" stroke-width="0.7"/><path d="M-3.95 -6.8 V6" stroke="#4a4a4a" stroke-width="0.6"/><path d="M0.1 -6.8 V6" stroke="#4a4a4a" stroke-width="0.6"/><path d="M4.15 -6.8 V6" stroke="#4a4a4a" stroke-width="0.6"/><path d="M-8 -0.4 H8.2" stroke="#4a4a4a" stroke-width="0.7"/><path d="M7.6 -0.4 L0.4 -3.6 V2.8 Z" fill="#000"/></g></svg>
<svg style="left:378px;top:252.8px" width="24" height="24" viewBox="-12 -12 24 24"><g shape-rendering="crispEdges"><path d="M-8 -3.2 H4 L8 3 H-8 Z" fill="none" stroke="#4a4a4a" stroke-width="0.7"/><path d="M-5.6 -3.2 V3" stroke="#4a4a4a" stroke-width="0.6"/><path d="M-3.2 -3.2 V3" stroke="#4a4a4a" stroke-width="0.6"/><path d="M-0.8 -3.2 V3" stroke="#4a4a4a" stroke-width="0.6"/><path d="M1.6 -3.2 V3" stroke="#4a4a4a" stroke-width="0.6"/><path d="M-8 -0.1 H8" stroke="#4a4a4a" stroke-width="0.7"/><path d="M7.6 -0.1 L3.2 -2.2 V2 Z" fill="#000"/></g></svg>
<svg style="left:401px;top:252.8px" width="24" height="24" viewBox="-12 -12 24 24"><g shape-rendering="crispEdges"><path d="M-8 -3.2 H8 V3 H-4 Z" fill="none" stroke="#4a4a4a" stroke-width="0.7"/><path d="M-1.6 -3.2 V3" stroke="#4a4a4a" stroke-width="0.6"/><path d="M0.8 -3.2 V3" stroke="#4a4a4a" stroke-width="0.6"/><path d="M3.2 -3.2 V3" stroke="#4a4a4a" stroke-width="0.6"/><path d="M5.6 -3.2 V3" stroke="#4a4a4a" stroke-width="0.6"/><path d="M-8 -0.1 H8" stroke="#4a4a4a" stroke-width="0.7"/><path d="M7.6 -0.1 L3.2 -2.2 V2 Z" fill="#000"/></g></svg>
<svg style="left:424px;top:252.8px" width="24" height="24" viewBox="-12 -12 24 24"><path d="M-8.00 7.70 A16 16 0 0 1 8.00 -8.30 L8.00 0.50 A7.2 7.2 0 0 0 0.80 7.70 Z" fill="none" stroke="#4a4a4a" stroke-width="0.75"/><path d="M-3.60 7.70 A11.6 11.6 0 0 1 8.00 -3.90" fill="none" stroke="#4a4a4a" stroke-width="0.6"/><path d="M0.98 6.10 L-7.60 4.14" stroke="#4a4a4a" stroke-width="0.6"/><path d="M1.51 4.58 L-6.42 0.76" stroke="#4a4a4a" stroke-width="0.6"/><path d="M2.37 3.21 L-4.51 -2.28" stroke="#4a4a4a" stroke-width="0.6"/><path d="M3.51 2.07 L-1.98 -4.81" stroke="#4a4a4a" stroke-width="0.6"/><path d="M4.88 1.21 L1.06 -6.72" stroke="#4a4a4a" stroke-width="0.6"/><path d="M6.40 0.68 L4.44 -7.90" stroke="#4a4a4a" stroke-width="0.6"/><path d="M7.60 -3.89 L3.28 -1.44 L3.12 -6.04 Z" fill="#000"/></svg>
<svg style="left:447px;top:252.8px" width="24" height="24" viewBox="-12 -12 24 24"><path d="M-8.00 7.20 A16 16 0 0 1 -0.00 -6.66 L6.22 -5.48 L4.40 0.96 A7.2 7.2 0 0 0 0.80 7.20 Z" fill="none" stroke="#4a4a4a" stroke-width="0.75"/><path d="M-3.60 7.20 A11.6 11.6 0 0 1 2.20 -2.85" fill="none" stroke="#4a4a4a" stroke-width="0.6"/><path d="M0.96 5.70 L-7.65 3.87" stroke="#4a4a4a" stroke-width="0.6"/><path d="M1.42 4.27 L-6.62 0.69" stroke="#4a4a4a" stroke-width="0.6"/><path d="M2.18 2.97 L-4.94 -2.20" stroke="#4a4a4a" stroke-width="0.6"/><path d="M3.18 1.85 L-2.71 -4.69" stroke="#4a4a4a" stroke-width="0.6"/><path d="M3.28 -3.40 L0.20 0.49 L-1.67 -3.71 Z" fill="#000"/></svg>
<svg style="left:470px;top:252.8px" width="24" height="24" viewBox="-12 -12 24 24"><path d="M-7.57 -0.48 A16 16 0 0 1 6.00 -8.00 L6.00 0.60 A7.4 7.4 0 0 0 -0.28 4.08 L-2.88 7.68 Z" fill="none" stroke="#4a4a4a" stroke-width="0.75"/><path d="M-3.92 1.80 A11.7 11.7 0 0 1 6.00 -3.70" fill="none" stroke="#4a4a4a" stroke-width="0.6"/><path d="M0.64 2.90 L-5.59 -3.03" stroke="#4a4a4a" stroke-width="0.6"/><path d="M1.78 1.92 L-3.13 -5.14" stroke="#4a4a4a" stroke-width="0.6"/><path d="M3.08 1.20 L-0.30 -6.71" stroke="#4a4a4a" stroke-width="0.6"/><path d="M4.51 0.75 L2.78 -7.67" stroke="#4a4a4a" stroke-width="0.6"/><path d="M5.59 -3.69 L1.27 -1.24 L1.11 -5.84 Z" fill="#000"/></svg>
<svg style="left:493px;top:252.8px" width="24" height="24" viewBox="-12 -12 24 24"><g transform="scale(-1 1)"><path d="M-8.00 7.70 A16 16 0 0 1 8.00 -8.30 L8.00 0.50 A7.2 7.2 0 0 0 0.80 7.70 Z" fill="none" stroke="#4a4a4a" stroke-width="0.75"/><path d="M-3.60 7.70 A11.6 11.6 0 0 1 8.00 -3.90" fill="none" stroke="#4a4a4a" stroke-width="0.6"/><path d="M0.98 6.10 L-7.60 4.14" stroke="#4a4a4a" stroke-width="0.6"/><path d="M1.51 4.58 L-6.42 0.76" stroke="#4a4a4a" stroke-width="0.6"/><path d="M2.37 3.21 L-4.51 -2.28" stroke="#4a4a4a" stroke-width="0.6"/><path d="M3.51 2.07 L-1.98 -4.81" stroke="#4a4a4a" stroke-width="0.6"/><path d="M4.88 1.21 L1.06 -6.72" stroke="#4a4a4a" stroke-width="0.6"/><path d="M6.40 0.68 L4.44 -7.90" stroke="#4a4a4a" stroke-width="0.6"/><path d="M7.60 -3.89 L3.28 -1.44 L3.12 -6.04 Z" fill="#000"/></g></svg>
<svg style="left:516px;top:252.8px" width="24" height="24" viewBox="-12 -12 24 24"><g transform="scale(-1 1)"><path d="M-8.00 7.20 A16 16 0 0 1 -0.00 -6.66 L6.22 -5.48 L4.40 0.96 A7.2 7.2 0 0 0 0.80 7.20 Z" fill="none" stroke="#4a4a4a" stroke-width="0.75"/><path d="M-3.60 7.20 A11.6 11.6 0 0 1 2.20 -2.85" fill="none" stroke="#4a4a4a" stroke-width="0.6"/><path d="M0.96 5.70 L-7.65 3.87" stroke="#4a4a4a" stroke-width="0.6"/><path d="M1.42 4.27 L-6.62 0.69" stroke="#4a4a4a" stroke-width="0.6"/><path d="M2.18 2.97 L-4.94 -2.20" stroke="#4a4a4a" stroke-width="0.6"/><path d="M3.18 1.85 L-2.71 -4.69" stroke="#4a4a4a" stroke-width="0.6"/><path d="M3.28 -3.40 L0.20 0.49 L-1.67 -3.71 Z" fill="#000"/></g></svg>
<svg style="left:539px;top:252.8px" width="24" height="24" viewBox="-12 -12 24 24"><g transform="scale(-1 1)"><path d="M-7.57 -0.48 A16 16 0 0 1 6.00 -8.00 L6.00 0.60 A7.4 7.4 0 0 0 -0.28 4.08 L-2.88 7.68 Z" fill="none" stroke="#4a4a4a" stroke-width="0.75"/><path d="M-3.92 1.80 A11.7 11.7 0 0 1 6.00 -3.70" fill="none" stroke="#4a4a4a" stroke-width="0.6"/><path d="M0.64 2.90 L-5.59 -3.03" stroke="#4a4a4a" stroke-width="0.6"/><path d="M1.78 1.92 L-3.13 -5.14" stroke="#4a4a4a" stroke-width="0.6"/><path d="M3.08 1.20 L-0.30 -6.71" stroke="#4a4a4a" stroke-width="0.6"/><path d="M4.51 0.75 L2.78 -7.67" stroke="#4a4a4a" stroke-width="0.6"/><path d="M5.59 -3.69 L1.27 -1.24 L1.11 -5.84 Z" fill="#000"/></g></svg>
<svg style="left:562px;top:252.8px" width="24" height="24" viewBox="-12 -12 24 24"><g shape-rendering="crispEdges"><rect x="-8" y="-7.6" width="16" height="14.6" fill="none" stroke="#4a4a4a" stroke-width="0.8"/><path d="M-4 -7.6 V7" stroke="#4a4a4a" stroke-width="0.7"/><path d="M0 -7.6 V7" stroke="#4a4a4a" stroke-width="0.7"/><path d="M4 -7.6 V7" stroke="#4a4a4a" stroke-width="0.7"/><path d="M-8 -3.95 H8" stroke="#4a4a4a" stroke-width="0.7"/><path d="M-8 -0.3 H8" stroke="#4a4a4a" stroke-width="0.7"/><path d="M-8 3.35 H8" stroke="#4a4a4a" stroke-width="0.7"/><path d="M-3 -4 H5 V2" fill="none" stroke="#4a4a4a" stroke-width="0.7"/><path d="M4.6 6.6 L7 1.6 H2.2 Z" fill="#000"/></g></svg>
<svg style="left:585px;top:252.8px" width="24" height="24" viewBox="-12 -12 24 24"><g shape-rendering="crispEdges"><rect x="-8" y="-6" width="6.4" height="8" fill="none" stroke="#4a4a4a" stroke-width="0.8"/><path d="M-5.86667 -6 V2" stroke="#4a4a4a" stroke-width="0.7"/><path d="M-3.73333 -6 V2" stroke="#4a4a4a" stroke-width="0.7"/><path d="M-8 -3.33333 H-1.6" stroke="#4a4a4a" stroke-width="0.7"/><path d="M-8 -0.666667 H-1.6" stroke="#4a4a4a" stroke-width="0.7"/><rect x="1.4" y="-6" width="6.6" height="11" fill="none" stroke="#4a4a4a" stroke-width="0.8"/><path d="M3.6 -6 V5" stroke="#4a4a4a" stroke-width="0.7"/><path d="M5.8 -6 V5" stroke="#4a4a4a" stroke-width="0.7"/><path d="M1.4 -2.33333 H8" stroke="#4a4a4a" stroke-width="0.7"/><path d="M1.4 1.33333 H8" stroke="#4a4a4a" stroke-width="0.7"/><path d="M-1.6 -3.6 L-5.6 -5.6 V-1.6 Z" fill="#000"/><path d="M4.8 5 L6.8 0.6 H2.8 Z" fill="#000"/></g></svg>
<svg style="left:608px;top:252.8px" width="24" height="24" viewBox="-12 -12 24 24"><g shape-rendering="crispEdges"><path d="M-7.6 -7.6 H4.6 V-1 H7 V2 H1.6 V7.8 H-7.6 Z" fill="none" stroke="#4a4a4a" stroke-width="0.7"/><path d="M-7.6 0.6 H1.6 M-7.6 3 H1.6 M-7.6 5.4 H1.6 M-3 0.6 V7.8" stroke="#4a4a4a" stroke-width="0.7"/><path d="M6.6 -3.8 L-0.4 -6.8 V-0.8 Z" fill="#000"/></g></svg>
<svg style="left:631px;top:252.8px" width="24" height="24" viewBox="-12 -12 24 24"><g shape-rendering="crispEdges"><path d="M-6 -7.6 H5 V7.6 H-2.6 V-2 H-6 Z" fill="none" stroke="#4a4a4a" stroke-width="0.7"/><path d="M-3 -7.6 V-2 M-6 -5 H5 M-2.6 0.6 H5 M-2.6 3.2 H5 M1.2 -2 V7.6" stroke="#4a4a4a" stroke-width="0.7"/><path d="M1.4 7.4 L4 2 H-1.2 Z" fill="#000"/></g></svg>
<svg style="left:654px;top:252.8px" width="24" height="24" viewBox="-12 -12 24 24"><g shape-rendering="crispEdges"><g transform="scale(-1 1)"><rect x="-8" y="-7.6" width="16" height="14.6" fill="none" stroke="#4a4a4a" stroke-width="0.8"/><path d="M-4 -7.6 V7" stroke="#4a4a4a" stroke-width="0.7"/><path d="M0 -7.6 V7" stroke="#4a4a4a" stroke-width="0.7"/><path d="M4 -7.6 V7" stroke="#4a4a4a" stroke-width="0.7"/><path d="M-8 -3.95 H8" stroke="#4a4a4a" stroke-width="0.7"/><path d="M-8 -0.3 H8" stroke="#4a4a4a" stroke-width="0.7"/><path d="M-8 3.35 H8" stroke="#4a4a4a" stroke-width="0.7"/><path d="M-3 -4 H5 V2" fill="none" stroke="#4a4a4a" stroke-width="0.7"/><path d="M4.6 6.6 L7 1.6 H2.2 Z" fill="#000"/></g></g></svg>
<svg style="left:677px;top:252.8px" width="24" height="24" viewBox="-12 -12 24 24"><g shape-rendering="crispEdges"><g transform="scale(-1 1)"><rect x="-8" y="-6" width="6.4" height="8" fill="none" stroke="#4a4a4a" stroke-width="0.8"/><path d="M-5.86667 -6 V2" stroke="#4a4a4a" stroke-width="0.7"/><path d="M-3.73333 -6 V2" stroke="#4a4a4a" stroke-width="0.7"/><path d="M-8 -3.33333 H-1.6" stroke="#4a4a4a" stroke-width="0.7"/><path d="M-8 -0.666667 H-1.6" stroke="#4a4a4a" stroke-width="0.7"/><rect x="1.4" y="-6" width="6.6" height="11" fill="none" stroke="#4a4a4a" stroke-width="0.8"/><path d="M3.6 -6 V5" stroke="#4a4a4a" stroke-width="0.7"/><path d="M5.8 -6 V5" stroke="#4a4a4a" stroke-width="0.7"/><path d="M1.4 -2.33333 H8" stroke="#4a4a4a" stroke-width="0.7"/><path d="M1.4 1.33333 H8" stroke="#4a4a4a" stroke-width="0.7"/><path d="M-1.6 -3.6 L-5.6 -5.6 V-1.6 Z" fill="#000"/><path d="M4.8 5 L6.8 0.6 H2.8 Z" fill="#000"/></g></g></svg>
<svg style="left:700px;top:252.8px" width="24" height="24" viewBox="-12 -12 24 24"><g shape-rendering="crispEdges"><g transform="scale(-1 1)"><path d="M-7.6 -7.6 H4.6 V-1 H7 V2 H1.6 V7.8 H-7.6 Z" fill="none" stroke="#4a4a4a" stroke-width="0.7"/><path d="M-7.6 0.6 H1.6 M-7.6 3 H1.6 M-7.6 5.4 H1.6 M-3 0.6 V7.8" stroke="#4a4a4a" stroke-width="0.7"/><path d="M6.6 -3.8 L-0.4 -6.8 V-0.8 Z" fill="#000"/></g></g></svg>
<svg style="left:723px;top:252.8px" width="24" height="24" viewBox="-12 -12 24 24"><g shape-rendering="crispEdges"><g transform="scale(-1 1)"><path d="M-6 -7.6 H5 V7.6 H-2.6 V-2 H-6 Z" fill="none" stroke="#4a4a4a" stroke-width="0.7"/><path d="M-3 -7.6 V-2 M-6 -5 H5 M-2.6 0.6 H5 M-2.6 3.2 H5 M1.2 -2 V7.6" stroke="#4a4a4a" stroke-width="0.7"/><path d="M1.4 7.4 L4 2 H-1.2 Z" fill="#000"/></g></g></svg>
<svg style="left:746px;top:252.8px" width="24" height="24" viewBox="-12 -12 24 24"><path d="M0 0 L5.82 4.89 A7.6 7.6 0 1 1 5.82 -4.89 Z" fill="none" stroke="#4a4a4a" stroke-width="0.8"/><path d="M3.52 2.96 A4.6 4.6 0 1 1 3.52 -2.96" fill="none" stroke="#4a4a4a" stroke-width="0.6"/><path d="M0 0 L2.85 7.05" stroke="#4a4a4a" stroke-width="0.6"/><path d="M0 0 L-0.79 7.56" stroke="#4a4a4a" stroke-width="0.6"/><path d="M0 0 L-4.25 6.30" stroke="#4a4a4a" stroke-width="0.6"/><path d="M0 0 L-6.71 3.57" stroke="#4a4a4a" stroke-width="0.6"/><path d="M0 0 L-7.60 0.00" stroke="#4a4a4a" stroke-width="0.6"/><path d="M0 0 L-6.71 -3.57" stroke="#4a4a4a" stroke-width="0.6"/><path d="M0 0 L-4.25 -6.30" stroke="#4a4a4a" stroke-width="0.6"/><path d="M0 0 L-0.79 -7.56" stroke="#4a4a4a" stroke-width="0.6"/><path d="M0 0 L2.85 -7.05" stroke="#4a4a4a" stroke-width="0.6"/><circle r="1.6" fill="#f0f0f0" stroke="#4a4a4a" stroke-width="0.6"/><path d="M4.6 4.6 L0.2 5.2 L2.2 1.6 Z" fill="#000"/></svg>
<svg style="left:769px;top:252.8px" width="24" height="24" viewBox="-12 -12 24 24"><g transform="scale(-1 1)"><path d="M0 0 L5.82 4.89 A7.6 7.6 0 1 1 5.82 -4.89 Z" fill="none" stroke="#4a4a4a" stroke-width="0.8"/><path d="M3.52 2.96 A4.6 4.6 0 1 1 3.52 -2.96" fill="none" stroke="#4a4a4a" stroke-width="0.6"/><path d="M0 0 L2.85 7.05" stroke="#4a4a4a" stroke-width="0.6"/><path d="M0 0 L-0.79 7.56" stroke="#4a4a4a" stroke-width="0.6"/><path d="M0 0 L-4.25 6.30" stroke="#4a4a4a" stroke-width="0.6"/><path d="M0 0 L-6.71 3.57" stroke="#4a4a4a" stroke-width="0.6"/><path d="M0 0 L-7.60 0.00" stroke="#4a4a4a" stroke-width="0.6"/><path d="M0 0 L-6.71 -3.57" stroke="#4a4a4a" stroke-width="0.6"/><path d="M0 0 L-4.25 -6.30" stroke="#4a4a4a" stroke-width="0.6"/><path d="M0 0 L-0.79 -7.56" stroke="#4a4a4a" stroke-width="0.6"/><path d="M0 0 L2.85 -7.05" stroke="#4a4a4a" stroke-width="0.6"/><circle r="1.6" fill="#f0f0f0" stroke="#4a4a4a" stroke-width="0.6"/><path d="M4.6 4.6 L0.2 5.2 L2.2 1.6 Z" fill="#000"/></g></svg>
<svg style="left:792px;top:252.8px" width="24" height="24" viewBox="-12 -12 24 24"><g shape-rendering="crispEdges"><path d="M-8 -3.2 H4 L8 3 H-8 Z" fill="none" stroke="#4a4a4a" stroke-width="0.7"/><path d="M-5.6 -3.2 V3" stroke="#4a4a4a" stroke-width="0.6"/><path d="M-3.2 -3.2 V3" stroke="#4a4a4a" stroke-width="0.6"/><path d="M-0.8 -3.2 V3" stroke="#4a4a4a" stroke-width="0.6"/><path d="M1.6 -3.2 V3" stroke="#4a4a4a" stroke-width="0.6"/><path d="M-8 -0.1 H8" stroke="#4a4a4a" stroke-width="0.7"/><path d="M7.6 -0.1 L3.2 -2.2 V2 Z" fill="#000"/></g></svg>
<svg style="left:815px;top:252.8px" width="24" height="24" viewBox="-12 -12 24 24"><g shape-rendering="crispEdges"><path d="M-8 -3.2 H8 V3 H-4 Z" fill="none" stroke="#4a4a4a" stroke-width="0.7"/><path d="M-1.6 -3.2 V3" stroke="#4a4a4a" stroke-width="0.6"/><path d="M0.8 -3.2 V3" stroke="#4a4a4a" stroke-width="0.6"/><path d="M3.2 -3.2 V3" stroke="#4a4a4a" stroke-width="0.6"/><path d="M5.6 -3.2 V3" stroke="#4a4a4a" stroke-width="0.6"/><path d="M-8 -0.1 H8" stroke="#4a4a4a" stroke-width="0.7"/><path d="M7.6 -0.1 L3.2 -2.2 V2 Z" fill="#000"/></g></svg>
<svg style="left:847.8px;top:254.8px" width="5" height="25" viewBox="0 0 5 25"><path d="M0.9 2 L2.5 0.4" stroke="#fff" stroke-width="1.2"/><path d="M1.6 2.8 L3.4 1.2" stroke="#a9a9a9" stroke-width="1.5"/><path d="M0.9 6 L2.5 4.4" stroke="#fff" stroke-width="1.2"/><path d="M1.6 6.8 L3.4 5.2" stroke="#a9a9a9" stroke-width="1.5"/><path d="M0.9 10 L2.5 8.4" stroke="#fff" stroke-width="1.2"/><path d="M1.6 10.8 L3.4 9.2" stroke="#a9a9a9" stroke-width="1.5"/><path d="M0.9 14 L2.5 12.4" stroke="#fff" stroke-width="1.2"/><path d="M1.6 14.8 L3.4 13.2" stroke="#a9a9a9" stroke-width="1.5"/><path d="M0.9 18 L2.5 16.4" stroke="#fff" stroke-width="1.2"/><path d="M1.6 18.8 L3.4 17.2" stroke="#a9a9a9" stroke-width="1.5"/><path d="M0.9 22 L2.5 20.4" stroke="#fff" stroke-width="1.2"/><path d="M1.6 22.8 L3.4 21.2" stroke="#a9a9a9" stroke-width="1.5"/></svg>
<svg style="left:856px;top:252.8px" width="24" height="24" viewBox="-12 -12 24 24"><g shape-rendering="crispEdges"><rect x="-7.8" y="-6.4" width="12.7" height="11.3" fill="none" stroke="#9a9a9a" stroke-width="0.9"/><path d="M1 -0.7 L8 -3.7 V2.3 Z" fill="#000"/></g></svg>
<svg style="left:879px;top:252.8px" width="24" height="24" viewBox="-12 -12 24 24"><g shape-rendering="crispEdges"><rect x="-5.8" y="-5.5" width="11.7" height="9.3" fill="none" stroke="#9a9a9a" stroke-width="0.9"/><path d="M-2.4 -0.7 L-8 -3.1 V1.7 Z" fill="#000"/><path d="M2.5 -0.7 L8 -3.1 V1.7 Z" fill="#000"/></g></svg>
<svg style="left:902px;top:252.8px" width="24" height="24" viewBox="-12 -12 24 24"><g shape-rendering="crispEdges"><rect x="-7.8" y="-6.4" width="12.7" height="11.3" fill="none" stroke="#9a9a9a" stroke-width="0.9"/><text x="-5.4" y="2.4" font-family="Liberation Sans, sans-serif" font-weight="bold" font-size="8.2">P</text><path d="M1.7 -0.7 L7.9 -3.5 V2.1 Z" fill="#000"/></g></svg>
<svg style="left:925px;top:252.8px" width="24" height="24" viewBox="-12 -12 24 24"><g shape-rendering="crispEdges"><rect x="-5.9" y="-5.5" width="11.8" height="9.3" fill="none" stroke="#9a9a9a" stroke-width="0.9"/><text x="-2.2" y="2.2" font-family="Liberation Sans, sans-serif" font-weight="bold" font-size="7">P</text><path d="M-3 -0.7 L-8 -2.9 V1.5 Z" fill="#000"/><path d="M3.5 -0.7 L8 -2.9 V1.5 Z" fill="#000"/></g></svg>
<svg style="left:323.8px;top:284.8px" width="5" height="25" viewBox="0 0 5 25"><path d="M0.9 2 L2.5 0.4" stroke="#fff" stroke-width="1.2"/><path d="M1.6 2.8 L3.4 1.2" stroke="#a9a9a9" stroke-width="1.5"/><path d="M0.9 6 L2.5 4.4" stroke="#fff" stroke-width="1.2"/><path d="M1.6 6.8 L3.4 5.2" stroke="#a9a9a9" stroke-width="1.5"/><path d="M0.9 10 L2.5 8.4" stroke="#fff" stroke-width="1.2"/><path d="M1.6 10.8 L3.4 9.2" stroke="#a9a9a9" stroke-width="1.5"/><path d="M0.9 14 L2.5 12.4" stroke="#fff" stroke-width="1.2"/><path d="M1.6 14.8 L3.4 13.2" stroke="#a9a9a9" stroke-width="1.5"/><path d="M0.9 18 L2.5 16.4" stroke="#fff" stroke-width="1.2"/><path d="M1.6 18.8 L3.4 17.2" stroke="#a9a9a9" stroke-width="1.5"/><path d="M0.9 22 L2.5 20.4" stroke="#fff" stroke-width="1.2"/><path d="M1.6 22.8 L3.4 21.2" stroke="#a9a9a9" stroke-width="1.5"/></svg>
<svg style="left:332px;top:282.8px" width="24" height="24" viewBox="-12 -12 24 24"><rect x="-7.8" y="-3.6" width="15.6" height="7.4" fill="#f7ba76" stroke="#a7672c" stroke-width="0.9"/><path d="M-5.4 0.2 H5.4 M-5.4 -1.6 V2 M5.4 -1.6 V2" stroke="#a7672c" stroke-width="0.8"/></svg>
<svg style="left:355px;top:282.8px" width="24" height="24" viewBox="-12 -12 24 24"><path d="M-2.8 7.8 L-3.2 4.2 C-8.2 0.6 -7 -7.6 0.2 -7.6 C7.4 -7.6 8.6 0.6 3.6 4.2 L3.2 7.8 Z" fill="#f7ba76" stroke="#d79a58" stroke-width="0.8"/></svg>
<svg style="left:378px;top:282.8px" width="24" height="24" viewBox="-12 -12 24 24"><g shape-rendering="crispEdges"><path d="M-8 -3.2 H8 V3 H-8 Z" fill="#f4f4f4" stroke="#4a4a4a" stroke-width="0.8"/><path d="M-8 -0.1 H8" stroke="#4a4a4a" stroke-width="0.7"/><path d="M7.2 -0.1 L2.6 -2.1 V1.9 Z" fill="#000"/></g></svg>
<svg style="left:401px;top:282.8px" width="24" height="24" viewBox="-12 -12 24 24"><g shape-rendering="crispEdges"><path d="M-8 -3.2 H4.6 L8 3 H-8 Z" fill="#f4f4f4" stroke="#4a4a4a" stroke-width="0.8"/><path d="M-8 -0.1 H8" stroke="#4a4a4a" stroke-width="0.7"/><path d="M6 -0.1 L1.4 -2.1 V1.9 Z" fill="#000"/></g></svg>
<svg style="left:424px;top:282.8px" width="24" height="24" viewBox="-12 -12 24 24"><g shape-rendering="crispEdges"><path d="M-8 -3.2 H8 V3 H-4.6 Z" fill="#f4f4f4" stroke="#4a4a4a" stroke-width="0.8"/><path d="M-6 -0.1 H8" stroke="#4a4a4a" stroke-width="0.7"/><path d="M7.2 -0.1 L2.6 -2.1 V1.9 Z" fill="#000"/></g></svg>
<svg style="left:447px;top:282.8px" width="24" height="24" viewBox="-12 -12 24 24"><defs><pattern id="hx" width="2" height="2" patternUnits="userSpaceOnUse"><rect width="2" height="2" fill="#e4e4e4"/><rect width="1" height="1" fill="#bdbdbd"/><rect x="1" y="1" width="1" height="1" fill="#bdbdbd"/></pattern></defs><rect x="-8" y="-3.4" width="16" height="7.4" fill="url(#hx)"/></svg>
<svg style="left:470px;top:282.8px" width="24" height="24" viewBox="-12 -12 24 24"><g shape-rendering="crispEdges"><rect x="-7.8" y="-5.6" width="15.8" height="11.4" fill="#fff" stroke="#8a8a8a" stroke-width="0.9"/><path d="M-7.8 -5.6 L8 5.8 M8 -5.6 L-7.8 5.8" stroke="#9a9a9a" stroke-width="0.8"/></g></svg>
<svg style="left:493px;top:282.8px" width="24" height="24" viewBox="-12 -12 24 24"><rect x="-7.7" y="-5.6" width="15.6" height="11.4" fill="#fff" stroke="#000" stroke-width="1"/><path d="M-7.7 5.8 L5.6 3.4 L7.9 -4.6 V5.8 Z" fill="#000"/></svg>
<svg style="left:525.8px;top:284.8px" width="5" height="25" viewBox="0 0 5 25"><path d="M0.9 2 L2.5 0.4" stroke="#fff" stroke-width="1.2"/><path d="M1.6 2.8 L3.4 1.2" stroke="#a9a9a9" stroke-width="1.5"/><path d="M0.9 6 L2.5 4.4" stroke="#fff" stroke-width="1.2"/><path d="M1.6 6.8 L3.4 5.2" stroke="#a9a9a9" stroke-width="1.5"/><path d="M0.9 10 L2.5 8.4" stroke="#fff" stroke-width="1.2"/><path d="M1.6 10.8 L3.4 9.2" stroke="#a9a9a9" stroke-width="1.5"/><path d="M0.9 14 L2.5 12.4" stroke="#fff" stroke-width="1.2"/><path d="M1.6 14.8 L3.4 13.2" stroke="#a9a9a9" stroke-width="1.5"/><path d="M0.9 18 L2.5 16.4" stroke="#fff" stroke-width="1.2"/><path d="M1.6 18.8 L3.4 17.2" stroke="#a9a9a9" stroke-width="1.5"/><path d="M0.9 22 L2.5 20.4" stroke="#fff" stroke-width="1.2"/><path d="M1.6 22.8 L3.4 21.2" stroke="#a9a9a9" stroke-width="1.5"/></svg>
<svg style="left:534px;top:282.8px" width="24" height="24" viewBox="-12 -12 24 24"><circle r="7.7" fill="#dcdcdc" stroke="#3a3a3a" stroke-width="1" stroke-dasharray="2.6 0.7"/><path d="M1.58 0.22 L6.93 0.97" stroke="#4a4a4a" stroke-width="0.9"/><path d="M2.21 0.94 L5.89 2.50" stroke="#fff" stroke-width="0.8"/><path d="M1.26 0.99 L5.52 4.31" stroke="#4a4a4a" stroke-width="0.9"/><path d="M1.44 1.92 L3.85 5.11" stroke="#fff" stroke-width="0.8"/><path d="M0.60 1.48 L2.62 6.49" stroke="#4a4a4a" stroke-width="0.9"/><path d="M0.29 2.38 L0.78 6.35" stroke="#fff" stroke-width="0.8"/><path d="M-0.22 1.58 L-0.97 6.93" stroke="#4a4a4a" stroke-width="0.9"/><path d="M-0.94 2.21 L-2.50 5.89" stroke="#fff" stroke-width="0.8"/><path d="M-0.99 1.26 L-4.31 5.52" stroke="#4a4a4a" stroke-width="0.9"/><path d="M-1.92 1.44 L-5.11 3.85" stroke="#fff" stroke-width="0.8"/><path d="M-1.48 0.60 L-6.49 2.62" stroke="#4a4a4a" stroke-width="0.9"/><path d="M-2.38 0.29 L-6.35 0.78" stroke="#fff" stroke-width="0.8"/><path d="M-1.58 -0.22 L-6.93 -0.97" stroke="#4a4a4a" stroke-width="0.9"/><path d="M-2.21 -0.94 L-5.89 -2.50" stroke="#fff" stroke-width="0.8"/><path d="M-1.26 -0.99 L-5.52 -4.31" stroke="#4a4a4a" stroke-width="0.9"/><path d="M-1.44 -1.92 L-3.85 -5.11" stroke="#fff" stroke-width="0.8"/><path d="M-0.60 -1.48 L-2.62 -6.49" stroke="#4a4a4a" stroke-width="0.9"/><path d="M-0.29 -2.38 L-0.78 -6.35" stroke="#fff" stroke-width="0.8"/><path d="M0.22 -1.58 L0.97 -6.93" stroke="#4a4a4a" stroke-width="0.9"/><path d="M0.94 -2.21 L2.50 -5.89" stroke="#fff" stroke-width="0.8"/><path d="M0.99 -1.26 L4.31 -5.52" stroke="#4a4a4a" stroke-width="0.9"/><path d="M1.92 -1.44 L5.11 -3.85" stroke="#fff" stroke-width="0.8"/><path d="M1.48 -0.60 L6.49 -2.62" stroke="#4a4a4a" stroke-width="0.9"/><path d="M2.38 -0.29 L6.35 -0.78" stroke="#fff" stroke-width="0.8"/><circle r="1.3" fill="#f0f0f0"/></svg>
<svg style="left:557px;top:282.8px" width="24" height="24" viewBox="-12 -12 24 24"><rect x="-8" y="-3.2" width="16" height="6.6" rx="2" fill="#f6f6f6" stroke="#8a8a8a" stroke-width="0.9"/><path d="M-4.6 -3 V3.2 M-1.4 -3 V3.2 M2.8 -3 V3.2 M-4.6 -1.6 H2.8 M-4.6 1.8 H2.8 M5.6 -2.4 V2.6" stroke="#9a9a9a" stroke-width="0.7"/></svg>
<svg style="left:589.8px;top:284.8px" width="5" height="25" viewBox="0 0 5 25"><path d="M0.9 2 L2.5 0.4" stroke="#fff" stroke-width="1.2"/><path d="M1.6 2.8 L3.4 1.2" stroke="#a9a9a9" stroke-width="1.5"/><path d="M0.9 6 L2.5 4.4" stroke="#fff" stroke-width="1.2"/><path d="M1.6 6.8 L3.4 5.2" stroke="#a9a9a9" stroke-width="1.5"/><path d="M0.9 10 L2.5 8.4" stroke="#fff" stroke-width="1.2"/><path d="M1.6 10.8 L3.4 9.2" stroke="#a9a9a9" stroke-width="1.5"/><path d="M0.9 14 L2.5 12.4" stroke="#fff" stroke-width="1.2"/><path d="M1.6 14.8 L3.4 13.2" stroke="#a9a9a9" stroke-width="1.5"/><path d="M0.9 18 L2.5 16.4" stroke="#fff" stroke-width="1.2"/><path d="M1.6 18.8 L3.4 17.2" stroke="#a9a9a9" stroke-width="1.5"/><path d="M0.9 22 L2.5 20.4" stroke="#fff" stroke-width="1.2"/><path d="M1.6 22.8 L3.4 21.2" stroke="#a9a9a9" stroke-width="1.5"/></svg>
<svg style="left:598px;top:282.8px" width="24" height="24" viewBox="-12 -12 24 24"><g shape-rendering="crispEdges"><rect x="-3.4" y="-7.4" width="7" height="15" fill="#fff" stroke="#3a3a3a" stroke-width="1.3"/><path d="M-3.4 -3.4 H3.6" stroke="#3a3a3a" stroke-width="1"/><rect x="-2.2" y="-6.4" width="4.6" height="2" fill="#ddd"/></g></svg>
<svg style="left:621px;top:282.8px" width="24" height="24" viewBox="-12 -12 24 24"><g shape-rendering="crispEdges"><rect x="-7.4" y="-7.2" width="15" height="14.6" fill="#fff" stroke="#3a3a3a" stroke-width="1.7"/><path d="M-7.4 -3.4 H-5 V-5.6 H-1 V-3.4 H1.2 V-5.6 H5.2 V-3.4 H7.6" fill="none" stroke="#3a3a3a" stroke-width="1.3"/></g></svg>
<svg style="left:644px;top:282.8px" width="24" height="24" viewBox="-12 -12 24 24"><g shape-rendering="crispEdges"><rect x="-7.6" y="-7.4" width="15.4" height="15" fill="#fff" stroke="#7d7d7d" stroke-width="0.9"/></g></svg>
<svg style="left:667px;top:282.8px" width="24" height="24" viewBox="-12 -12 24 24"><rect x="-7.6" y="-7.4" width="15.4" height="15" fill="#f7f7f7" stroke="#6d6d6d" stroke-width="0.9"/><circle cx="-3.6" cy="-3.6" r="2.4" fill="#fff" stroke="#555" stroke-width="0.8"/><circle cx="3.8" cy="-3.8" r="3.2" fill="#fff" stroke="#555" stroke-width="0.8"/><circle cx="-3.4" cy="3.8" r="3" fill="#fff" stroke="#555" stroke-width="0.8"/><circle cx="4" cy="3.8" r="2.4" fill="#fff" stroke="#555" stroke-width="0.8"/></svg>
<svg style="left:690px;top:282.8px" width="24" height="24" viewBox="-12 -12 24 24"><g shape-rendering="crispEdges"><rect x="-8" y="-7.8" width="16" height="15.6" fill="#fff"/><rect x="-7.5" y="-5" width="15" height="10" fill="#fff" stroke="#3a3a3a" stroke-width="1"/><path d="M0.5 -3 V5 M-7.5 -3 H7.5" stroke="#3a3a3a" stroke-width="1"/><rect x="-6.5" y="-4" width="13" height="8" fill="none" stroke="#8a8a8a" stroke-width="1"/></g></svg>
<svg style="left:713px;top:282.8px" width="24" height="24" viewBox="-12 -12 24 24"><g shape-rendering="crispEdges"><rect x="-7.6" y="-7.4" width="15.4" height="15" fill="#fff" stroke="#5d5d5d" stroke-width="0.9"/><path d="M0.2 -2 V2.6 M-1.8 -1 L2.2 1.6 M2.2 -1 L-1.8 1.6" stroke="#333" stroke-width="0.9"/></g></svg>
<svg style="left:736px;top:282.8px" width="24" height="24" viewBox="-12 -12 24 24"><rect x="-4" y="-4" width="8.4" height="8.4" fill="#fff" stroke="#222" stroke-width="1.1"/><rect x="-1.6" y="-7.4" width="3.4" height="3" fill="#fff" stroke="#222" stroke-width="1"/><rect x="-1.6" y="4.6" width="3.4" height="3" fill="#fff" stroke="#222" stroke-width="1"/><rect x="-7.4" y="-1.4" width="3" height="3.4" fill="#fff" stroke="#222" stroke-width="1"/><rect x="4.6" y="-1.4" width="3" height="3.4" fill="#fff" stroke="#222" stroke-width="1"/></svg>
<svg style="left:759px;top:282.8px" width="24" height="24" viewBox="-12 -12 24 24"><g shape-rendering="crispEdges"><path d="M-7.6 7.6 V-7.4 H7.8 V7.6" fill="#fff" stroke="#6a6a6a" stroke-width="0.9"/><path d="M-5.4 7.6 V-4.4 Q-5.4 -5.4 -4.4 -5.4 H4.6 Q5.6 -5.4 5.6 -4.4 V7.6" fill="#fff" stroke="#6a6a6a" stroke-width="0.9"/><path d="M-7.6 7.6 H7.8" stroke="#9a9a9a" stroke-width="0.7"/></g></svg>
<svg style="left:782px;top:282.8px" width="24" height="24" viewBox="-12 -12 24 24"><g shape-rendering="crispEdges"><rect x="-7.6" y="-4.2" width="15.4" height="9" fill="#fff" stroke="#6a6a6a" stroke-width="1.1"/><path d="M-7.6 -2.6 H7.8 M0.1 -2.6 V4.8" stroke="#8a8a8a" stroke-width="0.9"/></g></svg>
<svg style="left:805px;top:282.8px" width="24" height="24" viewBox="-12 -12 24 24"><g shape-rendering="crispEdges"><rect x="-7.8" y="-3.4" width="15.8" height="7.2" fill="#fff" stroke="#5a5a5a" stroke-width="1.2"/><path d="M-7.8 -1.8 H8 M-2.6 -1.8 V3.8 M2.8 -1.8 V3.8" stroke="#7a7a7a" stroke-width="0.9"/></g></svg>
<svg style="left:828px;top:282.8px" width="24" height="24" viewBox="-12 -12 24 24"><g shape-rendering="crispEdges"><rect x="-7.6" y="0.4" width="15.4" height="7.4" fill="#fff" stroke="#7a7a7a" stroke-width="0.9"/><rect x="-2.4" y="-7.2" width="5.4" height="6.4" fill="#fff" stroke="#444" stroke-width="1"/><path d="M-2.4 -6.4 H3" stroke="#333" stroke-width="1.2"/></g></svg>
<svg style="left:851px;top:282.8px" width="24" height="24" viewBox="-12 -12 24 24"><path d="M-7.8 -3.6 H5.6 Q7.9 -3.6 7.9 -1.2 V1.6 Q7.9 3.9 5.6 3.9 H-7.8 Z" fill="#fff" stroke="#555" stroke-width="1.5"/></svg>
<svg style="left:874px;top:282.8px" width="24" height="24" viewBox="-12 -12 24 24"><g shape-rendering="crispEdges"><rect x="-7.6" y="-7.6" width="15.4" height="15.4" fill="#fff" stroke="#555" stroke-width="1.5"/></g></svg>
<svg style="left:897px;top:282.8px" width="24" height="24" viewBox="-12 -12 24 24"><path d="M-7.8 -6.6 H8 V0 C8 9.6 -7.8 9.6 -7.8 0 Z" fill="#fff" stroke="#555" stroke-width="1.1"/><ellipse cx="0.1" cy="1.6" rx="7.4" ry="5.2" fill="#fff" stroke="#555" stroke-width="1"/></svg>
<svg style="left:920px;top:282.8px" width="24" height="24" viewBox="-12 -12 24 24"><rect x="-5.6" y="-7.4" width="11.4" height="4" rx="0.8" fill="#fff" stroke="#666" stroke-width="1.1"/><path d="M-0.6 -5.4 H0.8" stroke="#444" stroke-width="0.9"/><path d="M-4.2 -3.2 H4.4 V5.4 Q4.4 7.8 2 7.8 H-1.8 Q-4.2 7.8 -4.2 5.4 Z" fill="#fff" stroke="#666" stroke-width="1.2"/><path d="M-3 -1.6 H3.2 V5.6 H-3 Z" fill="none" stroke="#aaa" stroke-width="0.7"/></svg>
<svg style="left:0;top:0" width="1366" height="160" viewBox="0 0 1366 160">
<defs>
<linearGradient id="gtab" x1="0" y1="0" x2="0" y2="1"><stop offset="0" stop-color="#fdfdfd"/><stop offset="1" stop-color="#f1f1f1"/></linearGradient>
<linearGradient id="gor" x1="0" y1="0" x2="0" y2="1"><stop offset="0" stop-color="#ffe1b4"/><stop offset="0.45" stop-color="#ffc880"/><stop offset="1" stop-color="#fdb25c"/></linearGradient>
</defs>
<!-- left panel tabs -->
<path d="M147.5 152.5 L147.5 136 Q147.5 132.5 151 132.5 L213 132.5 Q215.5 132.5 215.7 135.5 L216.5 152.5 Z" fill="url(#gtab)" stroke="#8e8e8e" stroke-width="1"/>
<path d="M52 152.5 L304 152.5" stroke="#8e8e8e" stroke-width="1" fill="none"/>
<path d="M52 152.5 Q55 152.5 57 151 L78.5 134.6 Q81.3 132.5 85 132.5 L143.5 132.5 Q146.3 132.5 146.5 136 L147 150 Q147.2 152.5 149.5 152.5 L149.5 153.6 L52 153.6 Z" fill="#fff" stroke="none"/>
<path d="M52 152.5 Q55 152.5 57 151 L78.5 134.6 Q81.3 132.5 85 132.5 L143.5 132.5 Q146.3 132.5 146.5 136 L147 150 Q147.2 152.5 149.5 152.5" fill="none" stroke="#8e8e8e" stroke-width="1"/>
<!-- right panel tab -->
<path d="M1120 152.5 L1313 152.5" stroke="#8e8e8e" stroke-width="1" fill="none"/>
<path d="M1120 152.5 Q1123.5 152.5 1125.5 151 L1147 134.6 Q1149.8 132.5 1153.5 132.5 L1228 132.5 Q1230.8 132.5 1231 136 L1231.5 150 Q1231.7 152.5 1234 152.5 L1234 153.6 L1120 153.6 Z" fill="#fff" stroke="none"/>
<path d="M1120 152.5 Q1123.5 152.5 1125.5 151 L1147 134.6 Q1149.8 132.5 1153.5 132.5 L1228 132.5 Q1230.8 132.5 1231 136 L1231.5 150 Q1231.7 152.5 1234 152.5" fill="none" stroke="#8e8e8e" stroke-width="1"/>
<!-- centre orange tab -->
<path d="M318.5 153.6 L319.5 152.4 L337.5 135 Q340 132.5 343.5 132.5 L435 132.5 Q437.5 132.5 437.5 135.5 L437.5 153.6 Z" fill="url(#gor)" stroke="none"/><path d="M319.5 152.4 L337.5 135 Q340 132.5 343.5 132.5 L435 132.5 Q437.5 132.5 437.5 135.5 L437.5 152" fill="none" stroke="#a9adb2" stroke-width="1"/><path d="M321 152.4 L338.3 135.8 Q340.4 133.6 343.5 133.6 L434.6 133.6 Q436.4 133.6 436.4 135.5 L436.4 152" fill="none" stroke="#fff" stroke-width="1" opacity="0.85"/>
</svg>
<span class="t " style="left:103.9px;top:135px;letter-spacing:0.11px">Project</span>
<svg style="left:80.5px;top:130px" width="24" height="24" viewBox="-12 -12 24 24"><path d="M-8 -5 H8 V5.4 H1.8 L0 6.6 L-1.8 5.4 H-8 Z" fill="#2a66ad" stroke="#1d4c88" stroke-width="0.6"/><path d="M-6.8 -6.2 Q-3.4 -6.8 -0.4 -5.6 V3.8 Q-3.4 2.8 -6.8 3.4 Z M6.8 -6.2 Q3.4 -6.8 0.4 -5.6 V3.8 Q3.4 2.8 6.8 3.4 Z" fill="#fbfbfb" stroke="#bdbdbd" stroke-width="0.5"/><path d="M-5.6 -4 H-1.6 M-5.6 -2.2 H-1.6 M-5.6 -0.4 H-1.6 M-5.6 1.4 H-1.6 M1.6 -4 H5.6 M1.6 -2.2 H5.6 M1.6 -0.4 H5.6 M1.6 1.4 H5.6" stroke="#a3a3a3" stroke-width="0.8"/></svg>
<span class="t " style="left:174.6px;top:135px;letter-spacing:-0.40px">Zoeken</span>
<svg style="left:150.5px;top:130px" width="24" height="24" viewBox="-12 -12 24 24"><path d="M1.6 1.4 L6.6 6.2" stroke="#5a3a22" stroke-width="2.6" stroke-linecap="round"/><path d="M2.4 2.2 L6.4 6" stroke="#b9793f" stroke-width="1.2" stroke-linecap="round"/><circle cx="-2" cy="-2.4" r="4.4" fill="#fdf9d8" stroke="#858585" stroke-width="1.3"/></svg>
<span class="t b" style="left:364.3px;top:135px;letter-spacing:0.39px">Gelijkvloers</span>
<svg style="left:340px;top:130px" width="24" height="24" viewBox="-12 -12 24 24"><path d="M-7.6 -2.2 L0 -7.8 L7.6 -2.2 Z" fill="#fff" stroke="#9b9b9b" stroke-width="1.1" stroke-linejoin="round"/><rect x="-7" y="-2.4" width="14" height="9.6" fill="#fff" stroke="#8f8f8f" stroke-width="1.2"/><path d="M-6.4 2 H6.4" stroke="#c0703a" stroke-width="1.5"/><path d="M-6.4 -0.6 H6.4" stroke="#d9d9d9" stroke-width="0.8"/></svg>
<span class="t " style="left:1174px;top:135px;letter-spacing:-0.32px">Bibliotheek</span>
<svg style="left:1149.5px;top:130px" width="24" height="24" viewBox="-12 -12 24 24"><path d="M-6.8 -3 H-2.6 C-4 -7.4 2.4 -7.4 1 -3 H3.6 V-0.4 C8 -1.8 8 4.2 3.6 2.8 V7 H0.6 C1.6 3.8 -3 3.8 -2 7 H-6.8 V3 C-3.8 4 -3.8 -0.6 -6.8 0.4 Z" fill="#62b75a" stroke="#4a9e45" stroke-width="0.9" stroke-linejoin="round"/><path d="M-5.6 -1.8 H2.4 V5.8" fill="none" stroke="#8fd487" stroke-width="0.8" opacity="0.8"/></svg>
<svg style="left:1042.5px;top:129.5px" width="24" height="24" viewBox="-12 -12 24 24"><path d="M2.2 -4 L-2.2 0 L2.2 4 Z" fill="none" stroke="#000" stroke-width="1.05"/></svg>
<svg style="left:1059.5px;top:129.5px" width="24" height="24" viewBox="-12 -12 24 24"><path d="M-2.2 -4 L2.2 0 L-2.2 4 Z" fill="none" stroke="#000" stroke-width="1.05"/></svg>
<svg style="left:1075px;top:129.5px" width="24" height="24" viewBox="-12 -12 24 24"><rect x="-3.5" y="-3.9" width="7" height="7.8" fill="none" stroke="#000" stroke-width="1.2"/><path d="M-2 -1.7 H2 M-2 0.1 H2 M-2 1.9 H2" stroke="#000" stroke-width="0.9"/></svg>
<svg style="left:1091px;top:129.5px" width="24" height="24" viewBox="-12 -12 24 24"><path d="M-3.6 -3.3 L3.6 3.5 M3.6 -3.3 L-3.6 3.5" stroke="#000" stroke-width="1.7"/></svg>
<div class="" style="left:51px;top:1038px;width:1264px;height:28px;background:#f0f0f0"></div>
<div class="" style="left:51px;top:1039px;width:1264px;height:2px;background:#fafafa"></div>
<div class="" style="left:51px;top:1041px;width:1264px;height:1px;background:#dedede"></div>
<div class="" style="left:51px;top:1042px;width:1264px;height:1px;background:#b2b2b2"></div>
<div class="" style="left:51px;top:1043px;width:1264px;height:1px;background:#e2e2e2"></div>
<div class="" style="left:121px;top:1047px;width:1px;height:16px;background:#8c8c8c"></div>
<div class="" style="left:360px;top:1047px;width:1px;height:16px;background:#8c8c8c"></div>
<div class="" style="left:496px;top:1047px;width:1px;height:16px;background:#8c8c8c"></div>
<div class="" style="left:632px;top:1047px;width:1px;height:16px;background:#8c8c8c"></div>
<div class="" style="left:768px;top:1047px;width:1px;height:16px;background:#8c8c8c"></div>
<div class="" style="left:904px;top:1047px;width:1px;height:16px;background:#8c8c8c"></div>
<div class="" style="left:1199px;top:1047px;width:1px;height:16px;background:#8c8c8c"></div>
<svg style="left:52px;top:1043px" width="24" height="24" viewBox="-12 -12 24 24"><path d="M-7.2 6.8 L-6 2.4 L3.8 -6.4 Q6.4 -7 7.4 -3.4 L-2.8 5.6 Z" fill="#f7cf52" stroke="#c27f28" stroke-width="1" stroke-linejoin="round"/><path d="M-7.2 6.8 L-6 2.4 L-2.8 5.6 Z" fill="#f6e2c0" stroke="#c27f28" stroke-width="0.7"/><path d="M2.2 -5 L6 -1.8" stroke="#fff" stroke-width="1.3"/><path d="M-5 3.6 L4.6 -5" stroke="#fbe9a0" stroke-width="1.2"/></svg>
<span class="t " style="left:75.7px;top:1048.3px;letter-spacing:-0.60px">wim</span>
<svg style="left:225px;top:1042px" width="24" height="24" viewBox="-12 -12 24 24"><path d="M-8 -3.4 H-3.4 M3.4 -3.4 H8" stroke="#000" stroke-width="2.4"/><path d="M-3.4 -2.4 H3.4 M-3.6 -2.4 V4 C0.4 4 3.4 1.4 3.4 -2.4" fill="none" stroke="#8a8a8a" stroke-width="0.8"/></svg>
<span class="t " style="left:249px;top:1048.3px;">?</span>
<span class="t " style="left:503px;top:1048.3px;">x: 28,29 m</span>
<span class="t " style="left:639.1px;top:1048.3px;letter-spacing:0.02px">y: -14,96 m</span>
<span class="t " style="left:774.2px;top:1048.3px;">l:</span>
<svg style="left:907px;top:1043px" width="24" height="24" viewBox="-12 -12 24 24"><path d="M-7.4 2 A7.6 7.6 0 1 1 7.4 2" fill="none" stroke="#8e8e8e" stroke-width="1.9"/><path d="M-3.8 1.4 A4.1 4.1 0 1 1 3.8 1.4" fill="none" stroke="#8e8e8e" stroke-width="1.5"/><circle cx="0" cy="0.2" r="1.2" fill="#8e8e8e"/><path d="M0 0.6 L-4.4 7.6 M0 0.6 L4.4 7.6 M-2.4 4.6 H2.4" stroke="#8e8e8e" stroke-width="1.3" fill="none"/></svg>
<div class="" style="left:937px;top:1049px;width:258px;height:12px;background:#e6e6e6;border:1px solid #bcbcbc"></div>
<svg style="left:1202px;top:1043px" width="24" height="24" viewBox="-12 -12 24 24"><circle r="6.4" fill="#fff" stroke="#c8a35c" stroke-width="1.3"/><circle r="5" fill="#f4f8ff" stroke="#7ea2e4" stroke-width="1.1"/><path d="M0 -3.2 V0.4 L2.6 -1.4" fill="none" stroke="#777" stroke-width="1"/></svg>
<span class="t " style="left:1226px;top:1048px;">17:36:03</span>
</div></div></body></html>
